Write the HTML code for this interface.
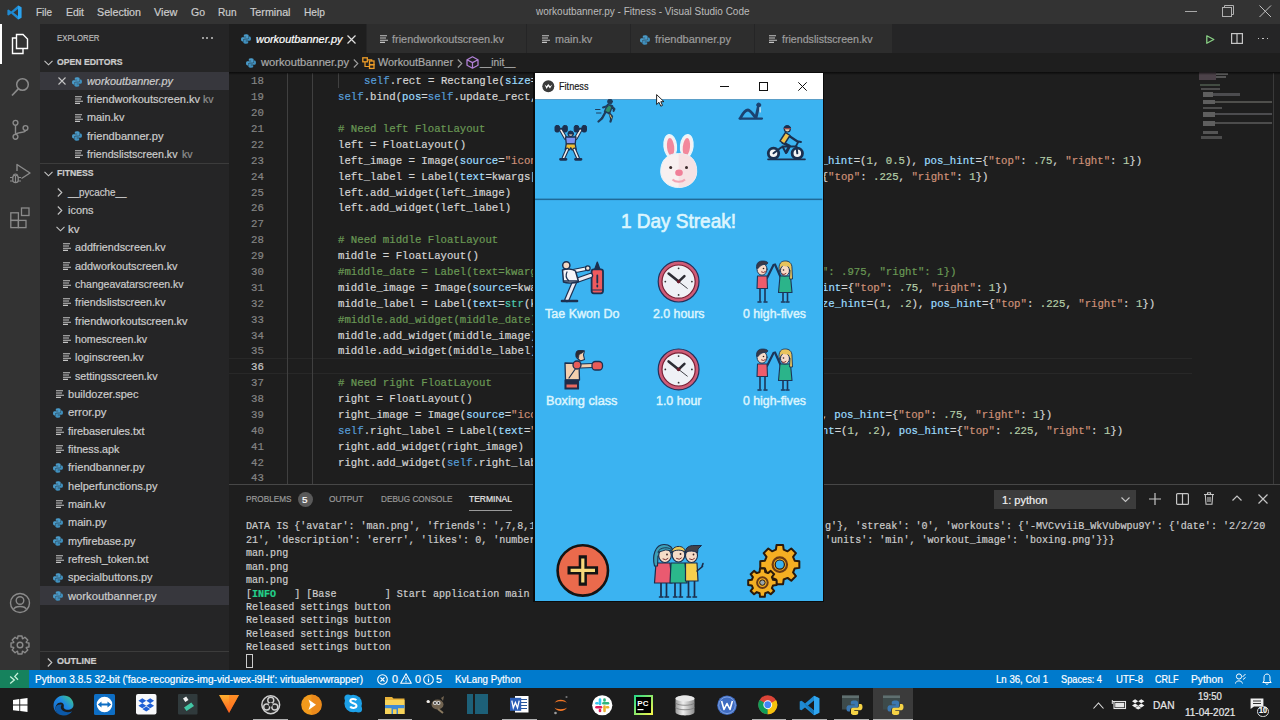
<!DOCTYPE html>
<html><head><meta charset="utf-8"><title>VS Code</title><style>*{margin:0;padding:0;box-sizing:border-box}
html,body{width:1280px;height:720px;overflow:hidden;background:#1e1e1e;font-family:"Liberation Sans",sans-serif}
.a{position:absolute}
.t{position:absolute;white-space:pre;line-height:1;-webkit-text-stroke:0.2px currentColor}
svg{overflow:visible}
</style></head><body>
<div class="a" style="left:0px;top:0px;width:1280px;height:24px;background:#333333;"></div>
<div class="a" style="left:0px;top:24px;width:40px;height:646px;background:#333333;"></div>
<div class="a" style="left:40px;top:24px;width:189px;height:646px;background:#252526;"></div>
<div class="a" style="left:229px;top:24px;width:1051px;height:29px;background:#252526;"></div>
<div class="a" style="left:229px;top:53px;width:1051px;height:19px;background:#1e1e1e;"></div>
<div class="a" style="left:0px;top:670px;width:1280px;height:18px;background:#007acc;"></div>
<div class="a" style="left:0px;top:670px;width:29px;height:18px;background:#16825d;"></div>
<div class="a" style="left:0px;top:688px;width:1280px;height:32px;background:#1c1c1c;"></div>
<svg class="a" style="left:7px;top:5px;" width="15" height="15" viewBox="0 0 15 15"><path d="M11 0.6 L14.4 2.2 V12.8 L11 14.4 L4.2 8.6 L1.6 10.6 L0.4 10 V5 L1.6 4.4 L4.2 6.4 Z" fill="#1f8ad2"/>
<path d="M11 4 L6.4 7.5 L11 11 Z" fill="#333"/><path d="M11 0.6 L14.4 2.2 V12.8 L11 14.4 Z" fill="#2ba3ee"/></svg>
<div class="a" style="left:1185px;top:11px;width:11.5px;height:1px;background:#a8a8a8;"></div>
<svg class="a" style="left:1222px;top:5px;" width="14" height="12" viewBox="0 0 14 12"><rect x="0.5" y="2.5" width="9" height="9" fill="none" stroke="#b0b0b0" stroke-width="1"/><path d="M2.5 2.5 V0.5 H11.5 V9.5 H9.5" fill="none" stroke="#b0b0b0" stroke-width="1"/></svg>
<svg class="a" style="left:1259px;top:5px;" width="13" height="13" viewBox="0 0 13 13"><path d="M0.5 0.5 L12 12 M12 0.5 L0.5 12" stroke="#c0c0c0" stroke-width="1"/></svg>
<div class="a" style="left:0px;top:24px;width:2px;height:40px;background:#ffffff;"></div>
<svg class="a" style="left:10px;top:33px;" width="22" height="22" viewBox="0 0 22 22"><path d="M6.5 1.5 H13 L17.5 6 V15.5 H6.5 Z" fill="none" stroke="#fff" stroke-width="1.4"/>
<path d="M6.5 5 H2.5 V20.5 H13 V15.5" fill="none" stroke="#fff" stroke-width="1.4"/></svg>
<svg class="a" style="left:10px;top:76px;" width="22" height="22" viewBox="0 0 22 22"><circle cx="12.5" cy="8.5" r="5.8" fill="none" stroke="#8b8b8b" stroke-width="1.5"/><path d="M8.3 12.8 L2 19.5" stroke="#8b8b8b" stroke-width="1.7"/></svg>
<svg class="a" style="left:10px;top:119px;" width="22" height="22" viewBox="0 0 22 22"><circle cx="5.5" cy="3.8" r="2.4" fill="none" stroke="#8b8b8b" stroke-width="1.4"/>
<circle cx="5.5" cy="17.8" r="2.4" fill="none" stroke="#8b8b8b" stroke-width="1.4"/>
<circle cx="15.5" cy="9" r="2.4" fill="none" stroke="#8b8b8b" stroke-width="1.4"/>
<path d="M5.5 6.2 V15.4 M15.5 11.4 C15.5 14 7 13 5.8 15.4" fill="none" stroke="#8b8b8b" stroke-width="1.4"/></svg>
<svg class="a" style="left:8px;top:162px;" width="24" height="24" viewBox="0 0 24 24"><path d="M9 9 V2.5 L22 11 L13.5 16.5" fill="none" stroke="#8b8b8b" stroke-width="1.4" stroke-linejoin="round"/>
<path d="M4.8 15.5 C4.8 12.3 10.2 12.3 10.2 15.5 V18.5 C10.2 21.2 4.8 21.2 4.8 18.5 Z" fill="none" stroke="#8b8b8b" stroke-width="1.3"/>
<path d="M5.5 13.5 C5.5 11.5 9.5 11.5 9.5 13.5" fill="none" stroke="#8b8b8b" stroke-width="1.2"/>
<path d="M2 15.5 H4.8 M10.2 15.5 H13 M2 19 H4.8 M10.2 19 H13 M7.5 14 V20.5" stroke="#8b8b8b" stroke-width="1.1"/></svg>
<svg class="a" style="left:10px;top:206px;" width="22" height="22" viewBox="0 0 22 22"><rect x="0.8" y="6.8" width="7.6" height="7.6" fill="none" stroke="#8b8b8b" stroke-width="1.3"/>
<rect x="0.8" y="14.4" width="7.6" height="7.2" fill="none" stroke="#8b8b8b" stroke-width="1.3"/>
<rect x="8.4" y="14.4" width="7.6" height="7.2" fill="none" stroke="#8b8b8b" stroke-width="1.3"/>
<rect x="11.5" y="2" width="7.5" height="7.5" fill="none" stroke="#8b8b8b" stroke-width="1.3"/></svg>
<svg class="a" style="left:9px;top:592px;" width="22" height="22" viewBox="0 0 22 22"><circle cx="11" cy="11" r="9.5" fill="none" stroke="#8b8b8b" stroke-width="1.4"/><circle cx="11" cy="8.5" r="3.8" fill="none" stroke="#8b8b8b" stroke-width="1.4"/><path d="M4.5 17.5 C6 13.5 16 13.5 17.5 17.5" fill="none" stroke="#8b8b8b" stroke-width="1.4"/></svg>
<svg class="a" style="left:9px;top:634px;" width="22" height="22" viewBox="0 0 22 22"><polygon points="19.98,8.99 19.98,13.01 17.36,13.40 17.19,13.81 18.77,15.93 15.93,18.77 13.81,17.19 13.40,17.36 13.01,19.98 8.99,19.98 8.60,17.36 8.19,17.19 6.07,18.77 3.23,15.93 4.81,13.81 4.64,13.40 2.02,13.01 2.02,8.99 4.64,8.60 4.81,8.19 3.23,6.07 6.07,3.23 8.19,4.81 8.60,4.64 8.99,2.02 13.01,2.02 13.40,4.64 13.81,4.81 15.93,3.23 18.77,6.07 17.19,8.19 17.36,8.60" fill="none" stroke="#8b8b8b" stroke-width="1.4" stroke-linejoin="round"/><circle cx="11" cy="11" r="2.8" fill="none" stroke="#8b8b8b" stroke-width="1.4"/></svg>
<div class="a" style="left:201.8px;top:37px;width:2.2px;height:2.2px;border-radius:1.1px;background:#c5c5c5"></div>
<div class="a" style="left:206.3px;top:37px;width:2.2px;height:2.2px;border-radius:1.1px;background:#c5c5c5"></div>
<div class="a" style="left:210.8px;top:37px;width:2.2px;height:2.2px;border-radius:1.1px;background:#c5c5c5"></div>
<svg class="a" style="left:44px;top:60px;" width="9" height="6" viewBox="0 0 9 6"><path d="M0.5 0.8 L4.5 4.8 L8.5 0.8" fill="none" stroke="#c5c5c5" stroke-width="1.1"/></svg>
<div class="a" style="left:40px;top:71.5px;width:189px;height:18px;background:#37373d;"></div>
<svg class="a" style="left:58px;top:77px;" width="8" height="8" viewBox="0 0 8 8"><path d="M0.5 0.5 L7.5 7.5 M7.5 0.5 L0.5 7.5" stroke="#c5c5c5" stroke-width="1.1"/></svg>
<div class="a" style="left:40px;top:163px;width:189px;height:1px;background:#3c3c3c;"></div>
<svg class="a" style="left:44px;top:171px;" width="9" height="6" viewBox="0 0 9 6"><path d="M0.5 0.8 L4.5 4.8 L8.5 0.8" fill="none" stroke="#c5c5c5" stroke-width="1.1"/></svg>
<svg class="a" style="left:57px;top:188.0px;" width="6" height="9" viewBox="0 0 6 9"><path d="M0.8 0.5 L4.8 4.5 L0.8 8.5" fill="none" stroke="#c5c5c5" stroke-width="1.1"/></svg>
<svg class="a" style="left:57px;top:206.35px;" width="6" height="9" viewBox="0 0 6 9"><path d="M0.8 0.5 L4.8 4.5 L0.8 8.5" fill="none" stroke="#c5c5c5" stroke-width="1.1"/></svg>
<svg class="a" style="left:56px;top:226.2px;" width="9" height="6" viewBox="0 0 9 6"><path d="M0.5 0.8 L4.5 4.8 L8.5 0.8" fill="none" stroke="#c5c5c5" stroke-width="1.1"/></svg>
<div class="a" style="left:40px;top:586.4000000000001px;width:189px;height:18.3px;background:#37373d;"></div>
<div class="a" style="left:40px;top:651px;width:189px;height:1px;background:#3c3c3c;"></div>
<svg class="a" style="left:47px;top:657.5px;" width="6" height="9" viewBox="0 0 6 9"><path d="M0.8 0.5 L4.8 4.5 L0.8 8.5" fill="none" stroke="#c5c5c5" stroke-width="1.1"/></svg>
<div class="a" style="left:229px;top:24px;width:137.5px;height:29px;background:#1e1e1e;"></div>
<div class="a" style="left:366.5px;top:24px;width:160.5px;height:29px;background:#2d2d2d;"></div>
<div class="a" style="left:526px;top:24px;width:1px;height:29px;background:#252526;"></div>
<div class="a" style="left:527px;top:24px;width:103.5px;height:29px;background:#2d2d2d;"></div>
<div class="a" style="left:629.5px;top:24px;width:1px;height:29px;background:#252526;"></div>
<div class="a" style="left:630.5px;top:24px;width:124.0px;height:29px;background:#2d2d2d;"></div>
<div class="a" style="left:753.5px;top:24px;width:1px;height:29px;background:#252526;"></div>
<div class="a" style="left:754.5px;top:24px;width:138.5px;height:29px;background:#2d2d2d;"></div>
<div class="a" style="left:892px;top:24px;width:1px;height:29px;background:#252526;"></div>
<div class="a" style="left:365.5px;top:24px;width:1px;height:29px;background:#252526;"></div>
<svg class="a" style="left:347px;top:35px;" width="9" height="9" viewBox="0 0 9 9"><path d="M0.5 0.5 L8.5 8.5 M8.5 0.5 L0.5 8.5" stroke="#e0e0e0" stroke-width="1.2"/></svg>
<svg class="a" style="left:1206px;top:34.5px;" width="9" height="9" viewBox="0 0 9 9"><path d="M0.8 0.8 L7.8 4.5 L0.8 8.2 Z" fill="none" stroke="#89d185" stroke-width="1.3" stroke-linejoin="round"/></svg>
<svg class="a" style="left:1231px;top:33px;" width="12" height="11" viewBox="0 0 12 11"><rect x="0.6" y="0.6" width="10.8" height="9.8" fill="none" stroke="#c5c5c5" stroke-width="1.2"/><path d="M6 0.6 V10.4" stroke="#c5c5c5" stroke-width="1.2"/></svg>
<div class="a" style="left:1257.5px;top:37.5px;width:1.8px;height:1.8px;background:#c5c5c5;"></div>
<div class="a" style="left:1262px;top:37.5px;width:1.8px;height:1.8px;background:#c5c5c5;"></div>
<div class="a" style="left:1266.5px;top:37.5px;width:1.8px;height:1.8px;background:#c5c5c5;"></div>
<svg class="a" style="left:353px;top:58.5px;" width="6" height="9" viewBox="0 0 6 9"><path d="M0.8 0.5 L4.8 4.5 L0.8 8.5" fill="none" stroke="#a0a0a0" stroke-width="1.1"/></svg>
<svg class="a" style="left:361.8px;top:56.5px;" width="13" height="12" viewBox="0 0 13 12"><rect x="0.8" y="0.8" width="4.5" height="4" fill="none" stroke="#ee9d28" stroke-width="1.3"/>
<rect x="7.5" y="4" width="4.5" height="3.6" fill="none" stroke="#ee9d28" stroke-width="1.3"/>
<rect x="7.5" y="7.8" width="4.5" height="3.6" fill="none" stroke="#ee9d28" stroke-width="1.3"/>
<path d="M3 5 V9.5 H7.5 M5.3 2.8 H9.7 V4" fill="none" stroke="#ee9d28" stroke-width="1.2"/></svg>
<svg class="a" style="left:457px;top:58.5px;" width="6" height="9" viewBox="0 0 6 9"><path d="M0.8 0.5 L4.8 4.5 L0.8 8.5" fill="none" stroke="#a0a0a0" stroke-width="1.1"/></svg>
<svg class="a" style="left:466px;top:56px;" width="13" height="13" viewBox="0 0 13 13"><path d="M6.5 0.8 L12 3.7 V9.3 L6.5 12.2 L1 9.3 V3.7 Z M1 3.7 L6.5 6.6 L12 3.7 M6.5 6.6 V12.2" fill="none" stroke="#b180d7" stroke-width="1.3" stroke-linejoin="round"/></svg>
<div class="a" style="left:229px;top:358.44000000000005px;width:963px;height:15.88px;background:transparent;border-top:1px solid #282828;border-bottom:1px solid #282828"></div>
<div class="a" style="left:286.8px;top:72.6px;width:1px;height:412.88px;background:#404040;"></div>
<div class="a" style="left:312.44px;top:72.6px;width:1px;height:412.88px;background:#404040;"></div>
<div class="a" style="left:338.08000000000004px;top:72.6px;width:1px;height:15.88px;background:#404040;"></div>
<div class="a" style="left:1273px;top:73px;width:1px;height:411px;background:#3a3a3a;"></div>
<div class="a" style="left:1199px;top:72px;width:17px;height:8px;background:#6a5a66;opacity:0.6"></div>
<div class="a" style="left:1216px;top:73px;width:12px;height:1.5px;background:#8a8a8a;opacity:0.6"></div>
<div class="a" style="left:1216px;top:76px;width:10px;height:1.5px;background:#7a7a7a;opacity:0.6"></div>
<div class="a" style="left:1200px;top:84px;width:20px;height:2px;background:#5a6a5a;opacity:0.6"></div>
<div class="a" style="left:1201px;top:88px;width:19px;height:2px;background:#6a6a6a;opacity:0.6"></div>
<div class="a" style="left:1203px;top:92px;width:10px;height:5px;background:#8a8a8a;opacity:0.6"></div>
<div class="a" style="left:1213px;top:93px;width:27px;height:2.5px;background:#6a6a70;opacity:0.6"></div>
<div class="a" style="left:1203px;top:100px;width:12px;height:4px;background:#8a8a8a;opacity:0.6"></div>
<div class="a" style="left:1215px;top:101px;width:57px;height:2px;background:#70706a;opacity:0.6"></div>
<div class="a" style="left:1203px;top:107px;width:19px;height:2px;background:#6a6a6a;opacity:0.6"></div>
<div class="a" style="left:1203px;top:112px;width:12px;height:5px;background:#8a8a8a;opacity:0.6"></div>
<div class="a" style="left:1215px;top:113px;width:57px;height:2px;background:#6a6a70;opacity:0.6"></div>
<div class="a" style="left:1203px;top:121px;width:12px;height:5px;background:#8a8a8a;opacity:0.6"></div>
<div class="a" style="left:1215px;top:122px;width:57px;height:2px;background:#6a6a6a;opacity:0.6"></div>
<div class="a" style="left:1203px;top:131px;width:15px;height:2.5px;background:#7a7a7a;opacity:0.6"></div>
<div class="a" style="left:1201px;top:136px;width:21px;height:3px;background:#6a6a6a;opacity:0.6"></div>
<div class="a" style="left:1192px;top:73px;width:81px;height:411px;background:transparent;"></div>
<div class="a" style="left:229px;top:484px;width:1051px;height:1px;background:#474747;"></div>
<div class="a" style="left:297.5px;top:492px;width:15px;height:15px;border-radius:8px;background:#5a5a5a"></div>
<div class="a" style="left:468.5px;top:510px;width:43px;height:1.3px;background:#9a9a9a;"></div>
<div class="a" style="left:994px;top:489.5px;width:141.5px;height:19.5px;background:#3c3c3c;"></div>
<svg class="a" style="left:1120.5px;top:497px;" width="9" height="6" viewBox="0 0 9 6"><path d="M0.5 0.5 L4.5 4.5 L8.5 0.5" fill="none" stroke="#c5c5c5" stroke-width="1.1"/></svg>
<svg class="a" style="left:1149px;top:493px;" width="12" height="12" viewBox="0 0 12 12"><path d="M6 0 V12 M0 6 H12" stroke="#c5c5c5" stroke-width="1.2"/></svg>
<svg class="a" style="left:1176px;top:493px;" width="13" height="12" viewBox="0 0 13 12"><rect x="0.6" y="0.6" width="11.8" height="10.8" rx="1" fill="none" stroke="#c5c5c5" stroke-width="1.2"/><path d="M6.5 0.6 V11.4" stroke="#c5c5c5" stroke-width="1.2"/></svg>
<svg class="a" style="left:1204px;top:492px;" width="10" height="13" viewBox="0 0 10 13"><path d="M0 2.5 H10 M3.5 2.5 V0.8 H6.5 V2.5 M1.3 2.5 L2 12.2 H8 L8.7 2.5 M4 5 V10 M6 5 V10" fill="none" stroke="#c5c5c5" stroke-width="1.1"/></svg>
<svg class="a" style="left:1231.5px;top:495px;" width="10" height="6" viewBox="0 0 10 6"><path d="M0.5 5.5 L5 1 L9.5 5.5" fill="none" stroke="#c5c5c5" stroke-width="1.2"/></svg>
<svg class="a" style="left:1258px;top:494px;" width="10" height="10" viewBox="0 0 10 10"><path d="M0.5 0.5 L9.5 9.5 M9.5 0.5 L0.5 9.5" stroke="#c5c5c5" stroke-width="1.2"/></svg>
<div class="a" style="left:246.3px;top:654px;width:6.4px;height:13.5px;background:transparent;border:1px solid #cccccc"></div>
<svg class="a" style="left:8px;top:672px;" width="12" height="13" viewBox="0 0 12 13"><path d="M2.2 4.6 L6.3 8 L2.2 11.4 M10 1 L6.8 4.4 L10 7.8" fill="none" stroke="#c8f2da" stroke-width="1.3"/></svg>
<svg class="a" style="left:377px;top:673.5px;" width="11" height="11" viewBox="0 0 11 11"><circle cx="5.5" cy="5.5" r="4.8" fill="none" stroke="#fff" stroke-width="1.1"/><path d="M3.5 3.5 L7.5 7.5 M7.5 3.5 L3.5 7.5" stroke="#fff" stroke-width="1.1"/></svg>
<svg class="a" style="left:400px;top:673px;" width="12" height="11" viewBox="0 0 12 11"><path d="M6 0.8 L11.3 10.3 H0.7 Z" fill="none" stroke="#fff" stroke-width="1.1" stroke-linejoin="round"/><path d="M6 4 V7.3 M6 8.3 V9.3" stroke="#fff" stroke-width="1.1"/></svg>
<svg class="a" style="left:422.5px;top:673.5px;" width="11" height="11" viewBox="0 0 11 11"><circle cx="5.5" cy="5.5" r="4.8" fill="none" stroke="#fff" stroke-width="1.1"/><path d="M5.5 4.5 V8.3 M5.5 2.6 V3.6" stroke="#fff" stroke-width="1.2"/></svg>
<svg class="a" style="left:1235px;top:673px;" width="11" height="11" viewBox="0 0 11 11"><circle cx="4" cy="3.5" r="2.6" fill="none" stroke="#fff" stroke-width="1"/><path d="M0.5 10.5 C0.8 7 7 7 7.5 10.5 M7.5 4 L10.5 1 M8 6.5 L10.5 4.5" fill="none" stroke="#fff" stroke-width="1"/></svg>
<svg class="a" style="left:1261.5px;top:672.5px;" width="10" height="12" viewBox="0 0 10 12"><path d="M5 1 C2.3 1 2 3.5 2 5 V8 L0.8 9.5 H9.2 L8 8 V5 C8 3.5 7.7 1 5 1 Z M3.8 10.5 C4 11.6 6 11.6 6.2 10.5" fill="none" stroke="#fff" stroke-width="1"/></svg>
<svg class="a" style="left:12.8px;top:697.6px;" width="15" height="14" viewBox="0 0 15 14"><path d="M0 1.9 L6.3 1 V6.6 H0 Z M7.2 0.9 L14.5 0 V6.6 H7.2 Z M0 7.5 H6.3 V13 L0 12.2 Z M7.2 7.5 H14.5 V14 L7.2 13.1 Z" fill="#ffffff"/></svg>
<svg class="a" style="left:52.5px;top:694.5px;" width="21" height="21" viewBox="0 0 21 21"><defs><linearGradient id="eg" x1="0" y1="1" x2="1" y2="0"><stop offset="0" stop-color="#1565c0"/><stop offset="0.55" stop-color="#1e88e5"/><stop offset="1" stop-color="#43d17a"/></linearGradient></defs>
<path d="M10.5 0.5 C16.5 0.5 20.5 4.8 20.5 9.8 C20.5 13 18 14.8 14.8 14.8 C12 14.8 10.2 13.5 10.8 11.3 C11.3 9.6 10 7.5 7.5 7.5 C4.4 7.5 2.5 10.5 2.5 13.5 C2.5 17.5 6.3 20.5 10.8 20.5 C4.8 20.5 0.5 16 0.5 10.5 C0.5 5 5 0.5 10.5 0.5 Z" fill="url(#eg)"/>
<path d="M2.5 13.5 C2.5 17.5 6.3 20.5 10.8 20.5 C14.5 20.5 17.5 18.8 19.2 16.2 C16 18 11 17.5 8.6 14.5 C7.5 13 7.6 11 8.8 9.8 C6 9 2.5 10.5 2.5 13.5 Z" fill="#0c59a8"/></svg>
<svg class="a" style="left:93.8px;top:694.4px;" width="21" height="21" viewBox="0 0 21 21"><rect x="0" y="0" width="21" height="21" rx="1.5" fill="#0e6ec4"/><circle cx="10.5" cy="10.5" r="7.8" fill="#ffffff"/><path d="M3.8 10.5 L7.5 7.6 V9.4 H13.5 V7.6 L17.2 10.5 L13.5 13.4 V11.6 H7.5 V13.4 Z" fill="#0e6ec4"/></svg>
<svg class="a" style="left:136px;top:694.4px;" width="20.5" height="20.5" viewBox="0 0 20.5 20.5"><rect x="0" y="0" width="20.5" height="20.5" rx="2" fill="#f7f8fa"/><path d="M6.3 4.2 L10.2 6.7 L6.3 9.2 L2.4 6.7 Z M14.2 4.2 L18.1 6.7 L14.2 9.2 L10.3 6.7 Z M6.3 9.3 L10.2 11.8 L6.3 14.3 L2.4 11.8 Z M14.2 9.3 L18.1 11.8 L14.2 14.3 L10.3 11.8 Z M6.4 14.9 L10.25 12.5 L14.1 14.9 L10.25 17.4 Z" fill="#1f5fd6"/></svg>
<svg class="a" style="left:177.8px;top:694.4px;" width="19.5" height="20.5" viewBox="0 0 19.5 20.5"><rect x="0" y="0" width="19.5" height="20.5" rx="1" fill="#303a3c"/><path d="M5 4.5 L8.2 2.5 L10.5 6 L7.3 8 Z" fill="#f2f2f2"/><path d="M6 13.5 L13.3 8.5 L16 12 L8.5 17 Z" fill="#43c7a6"/></svg>
<svg class="a" style="left:218.5px;top:694.5px;" width="20" height="18" viewBox="0 0 20 18"><defs><linearGradient id="og" x1="0" y1="0" x2="0" y2="1"><stop offset="0" stop-color="#ffb02e"/><stop offset="1" stop-color="#ff5a1f"/></linearGradient></defs><path d="M0 0 H20 L10 18 Z" fill="url(#og)"/><path d="M10 0 H20 L10 18 Z" fill="#ff7a20" opacity="0.6"/></svg>
<svg class="a" style="left:260.6px;top:694.5px;" width="19.5" height="19.5" viewBox="0 0 19.5 19.5"><circle cx="9.75" cy="9.75" r="8.9" fill="#2a2a2a" stroke="#d0d0d0" stroke-width="1.5"/><g fill="none" stroke="#d0d0d0" stroke-width="1.4"><circle cx="9.75" cy="5.2" r="3"/><circle cx="5.7" cy="12" r="3"/><circle cx="13.8" cy="12" r="3"/></g><circle cx="9.75" cy="9.75" r="2" fill="#2a2a2a"/></svg>
<div class="a" style="left:253px;top:718.5px;width:35px;height:1.5px;background:#b0b0b0;"></div>
<svg class="a" style="left:301px;top:693.5px;" width="21" height="21.5" viewBox="0 0 21 21.5"><circle cx="10.5" cy="10.75" r="10.3" fill="#f29a1c"/><path d="M10.5 0.45 A10.3 10.3 0 0 1 10.5 21.05 Z" fill="#e8801a" opacity="0.6"/><path d="M7.5 5.5 L15 10.7 L7.5 16 L9.3 10.7 Z" fill="#ffffff"/></svg>
<svg class="a" style="left:344px;top:694.4px;" width="18.5" height="19" viewBox="0 0 18.5 19"><circle cx="9.2" cy="9.5" r="8.8" fill="#1da1e8"/><circle cx="4" cy="4" r="3.6" fill="#1da1e8"/><circle cx="14.5" cy="15" r="3.6" fill="#1da1e8"/><path d="M12.3 6.3 C11.5 4.8 6.3 4.4 6.3 7 C6.3 9.6 12.5 8.8 12.5 11.8 C12.5 14.6 7.2 14.4 6.2 12.6" fill="none" stroke="#fff" stroke-width="2"/></svg>
<svg class="a" style="left:384.8px;top:694.5px;" width="19.5" height="19" viewBox="0 0 19.5 19"><path d="M0 2 H7 L8.5 3.5 H19.5 V19 H0 Z" fill="#e9b33a"/><rect x="0" y="5" width="19.5" height="14" fill="#f7d45a"/><rect x="0" y="10" width="19.5" height="3.2" fill="#3e8ad6"/><rect x="6.5" y="13" width="6.5" height="6" fill="#3e8ad6"/><rect x="8" y="14.3" width="3.5" height="4.7" fill="#f7d45a"/></svg>
<div class="a" style="left:378px;top:718.5px;width:34px;height:1.5px;background:#b0b0b0;"></div>
<svg class="a" style="left:425.8px;top:695px;" width="20.5" height="19" viewBox="0 0 20.5 19"><ellipse cx="11.5" cy="9.5" rx="6" ry="5" fill="#716350"/><circle cx="9" cy="8" r="2" fill="#ddd"/><circle cx="12.5" cy="8" r="2" fill="#ddd"/><circle cx="9" cy="8" r="0.9" fill="#222"/><circle cx="12.5" cy="8" r="0.9" fill="#222"/><path d="M4 7 L0.5 6.5 M12 14 L17 18" stroke="#8a7a60" stroke-width="2"/><path d="M15 3 L18 1 L17 6 Z" fill="#716350"/><circle cx="2.2" cy="6.5" r="1.5" fill="#eee"/></svg>
<div class="a" style="left:467px;top:694.2px;width:6.2px;height:20px;background:#1d6078;"></div>
<div class="a" style="left:474.7px;top:694.2px;width:13.5px;height:20px;background:#1d6078;"></div>
<svg class="a" style="left:509.7px;top:695px;" width="18.5" height="18.5" viewBox="0 0 18.5 18.5"><rect x="5" y="1" width="13.5" height="16.5" fill="#ffffff"/><g stroke="#2b579a" stroke-width="1.2"><path d="M10 4.5 H17 M10 7.5 H17 M10 10.5 H17 M10 13.5 H17"/></g><rect x="0" y="2.8" width="11.2" height="13" fill="#2b5eb8"/><path d="M1.8 5.6 L3.3 12.8 L5.4 7.5 L7.5 12.8 L9.2 5.6" fill="none" stroke="#fff" stroke-width="1.3"/></svg>
<div class="a" style="left:502px;top:718.5px;width:34.5px;height:1.5px;background:#b0b0b0;"></div>
<svg class="a" style="left:553px;top:694.5px;" width="15.5" height="20" viewBox="0 0 15.5 20"><path d="M1.5 8 C3.5 3.5 12 3.5 14 8 C12 5.8 3.5 5.8 1.5 8 Z" fill="#f37726"/><path d="M1.5 12.5 C3.5 17 12 17 14 12.5 C12 14.7 3.5 14.7 1.5 12.5 Z" fill="#f37726"/><circle cx="13.5" cy="2" r="1.1" fill="#767677"/><circle cx="2.5" cy="18" r="1.3" fill="#9e9e9e"/></svg>
<svg class="a" style="left:592px;top:694.5px;" width="20.5" height="20.5" viewBox="0 0 20.5 20.5"><circle cx="10.25" cy="10.25" r="10.1" fill="#ffffff"/><g stroke-linecap="round" stroke-width="2.6"><path d="M8 4.5 V9" stroke="#36c5f0"/><path d="M4.5 12.3 H9" stroke="#e01e5a"/><path d="M12.5 16 V11.5" stroke="#ecb22e"/><path d="M16 8.2 H11.5" stroke="#2eb67d"/><path d="M4.5 8.2 H5.5" stroke="#36c5f0"/><path d="M8 16 V15" stroke="#e01e5a"/><path d="M16 12.3 H15" stroke="#ecb22e"/><path d="M12.5 4.5 V5.5" stroke="#2eb67d"/></g></svg>
<svg class="a" style="left:634px;top:694.5px;" width="19" height="20" viewBox="0 0 19 20"><defs><linearGradient id="pcg" x1="0" y1="0" x2="1" y2="1"><stop offset="0" stop-color="#21d789"/><stop offset="1" stop-color="#fcf84a"/></linearGradient></defs><rect x="0" y="0" width="19" height="20" fill="url(#pcg)"/><rect x="2" y="2" width="15" height="16" fill="#000"/><text x="3.3" y="10.5" font-family="Liberation Sans" font-weight="700" font-size="8" fill="#fff">PC</text><rect x="3.5" y="14" width="6" height="1.2" fill="#fff"/></svg>
<svg class="a" style="left:674.8px;top:694.5px;" width="20" height="20.5" viewBox="0 0 20 20.5"><defs><linearGradient id="dbg" x1="0" y1="0" x2="1" y2="0"><stop offset="0" stop-color="#9a9a9a"/><stop offset="0.4" stop-color="#eeeeee"/><stop offset="1" stop-color="#8a8a8a"/></linearGradient></defs><path d="M0.5 3.5 C0.5 -0.5 19.5 -0.5 19.5 3.5 V17 C19.5 21.5 0.5 21.5 0.5 17 Z" fill="url(#dbg)"/><ellipse cx="10" cy="3.5" rx="9.5" ry="3" fill="#e8e8e8"/><path d="M0.5 8 C3 11 17 11 19.5 8 M0.5 12.5 C3 15.5 17 15.5 19.5 12.5" fill="none" stroke="#777" stroke-width="0.8"/></svg>
<svg class="a" style="left:716.5px;top:694.5px;" width="20" height="20.5" viewBox="0 0 20 20.5"><circle cx="10" cy="10.25" r="9.8" fill="#3f6cc2"/><circle cx="10" cy="10.25" r="8.3" fill="none" stroke="#8fb0ea" stroke-width="0.8"/><path d="M4.6 6 L7 14.5 L10 8.5 L13 14.5 L15.4 6" fill="none" stroke="#fff" stroke-width="1.6" stroke-linejoin="round"/></svg>
<svg class="a" style="left:758px;top:695px;" width="19.5" height="19.5" viewBox="0 0 19.5 19.5"><circle cx="9.75" cy="9.75" r="9.5" fill="#db4437"/><path d="M9.75 9.75 L1.5 5 A9.5 9.5 0 0 0 9.75 19.25 Z" fill="#0f9d58"/><path d="M9.75 9.75 L9.75 19.25 A9.5 9.5 0 0 0 18 5 Z" fill="#f4c20d"/><path d="M9.75 9.75 L18 5 L9.75 5 Z" fill="#db4437"/><circle cx="9.75" cy="9.75" r="4.4" fill="#fff"/><circle cx="9.75" cy="9.75" r="3.4" fill="#4285f4"/></svg>
<div class="a" style="left:751.6px;top:718.5px;width:34px;height:1.5px;background:#b0b0b0;"></div>
<svg class="a" style="left:799.4px;top:694.5px;" width="21" height="21" viewBox="0 0 21 21"><path d="M15 0.8 L20.3 3.3 V17.7 L15 20.2 L6 12.5 L2.5 15.3 L0.7 14.5 V6.5 L2.5 5.7 L6 8.5 Z" fill="#1f8ad2"/><path d="M15 5.6 L9 10.5 L15 15.4 Z" fill="#1c1c1c"/><path d="M2.5 5.7 L15 15.4 V20.2 Z" fill="#1679bd"/><path d="M15 0.8 L20.3 3.3 V17.7 L15 20.2 Z" fill="#30a6f0"/></svg>
<div class="a" style="left:792.3px;top:718.5px;width:35px;height:1.5px;background:#b0b0b0;"></div>
<div class="a" style="left:833.6px;top:718.5px;width:35px;height:1.5px;background:#b0b0b0;"></div>
<svg class="a" style="left:841.6px;top:695px;" width="21" height="20" viewBox="0 0 21 20"><rect x="0" y="0.5" width="17" height="14" fill="#3d4a4a"/><rect x="0" y="0.5" width="17" height="2.5" fill="#607070"/>
<path d="M12.5 5.5 C8.5 5.5 8.8 7.3 8.8 7.3 V9.5 H12.7 V10.3 H6.8 C6.8 10.3 4.5 10.2 4.5 13.5 C4.5 16.8 6.5 16.5 6.5 16.5 H8 V14.8 C8 14.8 8 12.8 10 12.8 H14 C14 12.8 16 12.8 16 10.8 V7.5 C16 7.5 16.3 5.5 12.5 5.5 Z" fill="#3b77b0"/>
<path d="M12.5 20 C16.5 20 16.2 18.2 16.2 18.2 V16 H12.3 V15.2 H18.2 C18.2 15.2 20.5 15.3 20.5 12 C20.5 8.7 18.5 9 18.5 9 H17 V10.7 C17 10.7 17 12.7 15 12.7 H11 C11 12.7 9 12.7 9 14.7 V18 C9 18 8.7 20 12.5 20 Z" fill="#f6d345"/></svg>
<div class="a" style="left:872.5px;top:688px;width:40.5px;height:32px;background:#3b3b3b;"></div>
<div class="a" style="left:872.5px;top:718.5px;width:40.5px;height:1.5px;background:#b8b8b8;"></div>
<svg class="a" style="left:883px;top:695px;" width="21" height="20" viewBox="0 0 21 20"><rect x="0" y="0.5" width="17" height="14" fill="#3d4a4a"/><rect x="0" y="0.5" width="17" height="2.5" fill="#607070"/>
<path d="M12.5 5.5 C8.5 5.5 8.8 7.3 8.8 7.3 V9.5 H12.7 V10.3 H6.8 C6.8 10.3 4.5 10.2 4.5 13.5 C4.5 16.8 6.5 16.5 6.5 16.5 H8 V14.8 C8 14.8 8 12.8 10 12.8 H14 C14 12.8 16 12.8 16 10.8 V7.5 C16 7.5 16.3 5.5 12.5 5.5 Z" fill="#3b77b0"/>
<path d="M12.5 20 C16.5 20 16.2 18.2 16.2 18.2 V16 H12.3 V15.2 H18.2 C18.2 15.2 20.5 15.3 20.5 12 C20.5 8.7 18.5 9 18.5 9 H17 V10.7 C17 10.7 17 12.7 15 12.7 H11 C11 12.7 9 12.7 9 14.7 V18 C9 18 8.7 20 12.5 20 Z" fill="#f6d345"/></svg>
<svg class="a" style="left:1093.3px;top:701.5px;" width="11" height="7" viewBox="0 0 11 7"><path d="M0.5 6.5 L5.5 1 L10.5 6.5" fill="none" stroke="#e0e0e0" stroke-width="1.1"/></svg>
<svg class="a" style="left:1112px;top:700.2px;" width="14" height="9" viewBox="0 0 14 9"><rect x="2" y="1.5" width="11.5" height="7" fill="none" stroke="#e6e6e6" stroke-width="1.1"/><rect x="3.2" y="2.8" width="9" height="4.5" fill="#e6e6e6"/><path d="M0.3 0 V4 M0.3 1.5 H2" stroke="#e6e6e6" stroke-width="1"/></svg>
<svg class="a" style="left:1132.3px;top:699.3px;" width="12.5" height="10.5" viewBox="0 0 12.5 10.5"><path d="M3.1 0.3 L6.2 2.3 L3.1 4.3 L0 2.3 Z M9.3 0.3 L12.4 2.3 L9.3 4.3 L6.2 2.3 Z M3.1 4.4 L6.2 6.4 L3.1 8.4 L0 6.4 Z M9.3 4.4 L12.4 6.4 L9.3 8.4 L6.2 6.4 Z M3.2 8.9 L6.2 7 L9.2 8.9 L6.2 10.5 Z" fill="#f0f0f0"/></svg>
<svg class="a" style="left:1250px;top:698.3px;" width="14" height="11.5" viewBox="0 0 14 11.5"><path d="M0.6 0.6 H13.4 V8.6 H4 L0.6 11 Z" fill="#f0f0f0"/><path d="M3 3 H11 M3 5.5 H11" stroke="#1c1c1c" stroke-width="0.9"/></svg>
<div class="a" style="left:1257.2px;top:705.5px;width:11.5px;height:11.5px;border-radius:6px;background:#1c1c1c;border:1px solid #dcdcdc"></div>
<svg class="a" style="left:72px;top:76.5px;" width="10" height="10" viewBox="0 0 10 10"><path d="M5 0.3 C2.6 0.3 2.8 1.3 2.8 1.3 V2.8 H5.2 V3.3 H1.6 C1.6 3.3 0 3.1 0 5.3 C0 7.5 1.4 7.4 1.4 7.4 H2.3 V6.2 C2.3 6.2 2.2 4.8 3.7 4.8 H6.2 C6.2 4.8 7.6 4.8 7.6 3.5 V1.5 C7.6 1.5 7.8 0.3 5 0.3 Z" fill="#4a9bc9"/>
<path d="M5 9.7 C7.4 9.7 7.2 8.7 7.2 8.7 V7.2 H4.8 V6.7 H8.4 C8.4 6.7 10 6.9 10 4.7 C10 2.5 8.6 2.6 8.6 2.6 H7.7 V3.8 C7.7 3.8 7.8 5.2 6.3 5.2 H3.8 C3.8 5.2 2.4 5.2 2.4 6.5 V8.5 C2.4 8.5 2.2 9.7 5 9.7 Z" fill="#3f8fbd"/></svg>
<svg class="a" style="left:75px;top:95.5px;" width="9" height="9" viewBox="0 0 9 9"><path d="M0 0.8 H7 M0 3 H6 M0 5.2 H8 M0 7.4 H5" stroke="#c5c5c5" stroke-width="1.1"/></svg>
<svg class="a" style="left:75px;top:113.5px;" width="9" height="9" viewBox="0 0 9 9"><path d="M0 0.8 H7 M0 3 H6 M0 5.2 H8 M0 7.4 H5" stroke="#c5c5c5" stroke-width="1.1"/></svg>
<svg class="a" style="left:72px;top:131px;" width="10" height="10" viewBox="0 0 10 10"><path d="M5 0.3 C2.6 0.3 2.8 1.3 2.8 1.3 V2.8 H5.2 V3.3 H1.6 C1.6 3.3 0 3.1 0 5.3 C0 7.5 1.4 7.4 1.4 7.4 H2.3 V6.2 C2.3 6.2 2.2 4.8 3.7 4.8 H6.2 C6.2 4.8 7.6 4.8 7.6 3.5 V1.5 C7.6 1.5 7.8 0.3 5 0.3 Z" fill="#4a9bc9"/>
<path d="M5 9.7 C7.4 9.7 7.2 8.7 7.2 8.7 V7.2 H4.8 V6.7 H8.4 C8.4 6.7 10 6.9 10 4.7 C10 2.5 8.6 2.6 8.6 2.6 H7.7 V3.8 C7.7 3.8 7.8 5.2 6.3 5.2 H3.8 C3.8 5.2 2.4 5.2 2.4 6.5 V8.5 C2.4 8.5 2.2 9.7 5 9.7 Z" fill="#3f8fbd"/></svg>
<svg class="a" style="left:75px;top:150px;" width="9" height="9" viewBox="0 0 9 9"><path d="M0 0.8 H7 M0 3 H6 M0 5.2 H8 M0 7.4 H5" stroke="#c5c5c5" stroke-width="1.1"/></svg>
<svg class="a" style="left:62.5px;top:243.25px;" width="9" height="9" viewBox="0 0 9 9"><path d="M0 0.8 H7 M0 3 H6 M0 5.2 H8 M0 7.4 H5" stroke="#c5c5c5" stroke-width="1.1"/></svg>
<svg class="a" style="left:62.5px;top:261.59999999999997px;" width="9" height="9" viewBox="0 0 9 9"><path d="M0 0.8 H7 M0 3 H6 M0 5.2 H8 M0 7.4 H5" stroke="#c5c5c5" stroke-width="1.1"/></svg>
<svg class="a" style="left:62.5px;top:279.95px;" width="9" height="9" viewBox="0 0 9 9"><path d="M0 0.8 H7 M0 3 H6 M0 5.2 H8 M0 7.4 H5" stroke="#c5c5c5" stroke-width="1.1"/></svg>
<svg class="a" style="left:62.5px;top:298.3px;" width="9" height="9" viewBox="0 0 9 9"><path d="M0 0.8 H7 M0 3 H6 M0 5.2 H8 M0 7.4 H5" stroke="#c5c5c5" stroke-width="1.1"/></svg>
<svg class="a" style="left:62.5px;top:316.65000000000003px;" width="9" height="9" viewBox="0 0 9 9"><path d="M0 0.8 H7 M0 3 H6 M0 5.2 H8 M0 7.4 H5" stroke="#c5c5c5" stroke-width="1.1"/></svg>
<svg class="a" style="left:62.5px;top:335.0px;" width="9" height="9" viewBox="0 0 9 9"><path d="M0 0.8 H7 M0 3 H6 M0 5.2 H8 M0 7.4 H5" stroke="#c5c5c5" stroke-width="1.1"/></svg>
<svg class="a" style="left:62.5px;top:353.34999999999997px;" width="9" height="9" viewBox="0 0 9 9"><path d="M0 0.8 H7 M0 3 H6 M0 5.2 H8 M0 7.4 H5" stroke="#c5c5c5" stroke-width="1.1"/></svg>
<svg class="a" style="left:62.5px;top:371.7px;" width="9" height="9" viewBox="0 0 9 9"><path d="M0 0.8 H7 M0 3 H6 M0 5.2 H8 M0 7.4 H5" stroke="#c5c5c5" stroke-width="1.1"/></svg>
<svg class="a" style="left:56px;top:390.05px;" width="9" height="9" viewBox="0 0 9 9"><path d="M0 0.8 H7 M0 3 H6 M0 5.2 H8 M0 7.4 H5" stroke="#c5c5c5" stroke-width="1.1"/></svg>
<svg class="a" style="left:53px;top:407.70000000000005px;" width="10" height="10" viewBox="0 0 10 10"><path d="M5 0.3 C2.6 0.3 2.8 1.3 2.8 1.3 V2.8 H5.2 V3.3 H1.6 C1.6 3.3 0 3.1 0 5.3 C0 7.5 1.4 7.4 1.4 7.4 H2.3 V6.2 C2.3 6.2 2.2 4.8 3.7 4.8 H6.2 C6.2 4.8 7.6 4.8 7.6 3.5 V1.5 C7.6 1.5 7.8 0.3 5 0.3 Z" fill="#4a9bc9"/>
<path d="M5 9.7 C7.4 9.7 7.2 8.7 7.2 8.7 V7.2 H4.8 V6.7 H8.4 C8.4 6.7 10 6.9 10 4.7 C10 2.5 8.6 2.6 8.6 2.6 H7.7 V3.8 C7.7 3.8 7.8 5.2 6.3 5.2 H3.8 C3.8 5.2 2.4 5.2 2.4 6.5 V8.5 C2.4 8.5 2.2 9.7 5 9.7 Z" fill="#3f8fbd"/></svg>
<svg class="a" style="left:56px;top:426.75px;" width="9" height="9" viewBox="0 0 9 9"><path d="M0 0.8 H7 M0 3 H6 M0 5.2 H8 M0 7.4 H5" stroke="#c5c5c5" stroke-width="1.1"/></svg>
<svg class="a" style="left:56px;top:445.1px;" width="9" height="9" viewBox="0 0 9 9"><path d="M0 0.8 H7 M0 3 H6 M0 5.2 H8 M0 7.4 H5" stroke="#c5c5c5" stroke-width="1.1"/></svg>
<svg class="a" style="left:53px;top:462.75px;" width="10" height="10" viewBox="0 0 10 10"><path d="M5 0.3 C2.6 0.3 2.8 1.3 2.8 1.3 V2.8 H5.2 V3.3 H1.6 C1.6 3.3 0 3.1 0 5.3 C0 7.5 1.4 7.4 1.4 7.4 H2.3 V6.2 C2.3 6.2 2.2 4.8 3.7 4.8 H6.2 C6.2 4.8 7.6 4.8 7.6 3.5 V1.5 C7.6 1.5 7.8 0.3 5 0.3 Z" fill="#4a9bc9"/>
<path d="M5 9.7 C7.4 9.7 7.2 8.7 7.2 8.7 V7.2 H4.8 V6.7 H8.4 C8.4 6.7 10 6.9 10 4.7 C10 2.5 8.6 2.6 8.6 2.6 H7.7 V3.8 C7.7 3.8 7.8 5.2 6.3 5.2 H3.8 C3.8 5.2 2.4 5.2 2.4 6.5 V8.5 C2.4 8.5 2.2 9.7 5 9.7 Z" fill="#3f8fbd"/></svg>
<svg class="a" style="left:53px;top:481.1px;" width="10" height="10" viewBox="0 0 10 10"><path d="M5 0.3 C2.6 0.3 2.8 1.3 2.8 1.3 V2.8 H5.2 V3.3 H1.6 C1.6 3.3 0 3.1 0 5.3 C0 7.5 1.4 7.4 1.4 7.4 H2.3 V6.2 C2.3 6.2 2.2 4.8 3.7 4.8 H6.2 C6.2 4.8 7.6 4.8 7.6 3.5 V1.5 C7.6 1.5 7.8 0.3 5 0.3 Z" fill="#4a9bc9"/>
<path d="M5 9.7 C7.4 9.7 7.2 8.7 7.2 8.7 V7.2 H4.8 V6.7 H8.4 C8.4 6.7 10 6.9 10 4.7 C10 2.5 8.6 2.6 8.6 2.6 H7.7 V3.8 C7.7 3.8 7.8 5.2 6.3 5.2 H3.8 C3.8 5.2 2.4 5.2 2.4 6.5 V8.5 C2.4 8.5 2.2 9.7 5 9.7 Z" fill="#3f8fbd"/></svg>
<svg class="a" style="left:56px;top:500.15000000000003px;" width="9" height="9" viewBox="0 0 9 9"><path d="M0 0.8 H7 M0 3 H6 M0 5.2 H8 M0 7.4 H5" stroke="#c5c5c5" stroke-width="1.1"/></svg>
<svg class="a" style="left:53px;top:517.8px;" width="10" height="10" viewBox="0 0 10 10"><path d="M5 0.3 C2.6 0.3 2.8 1.3 2.8 1.3 V2.8 H5.2 V3.3 H1.6 C1.6 3.3 0 3.1 0 5.3 C0 7.5 1.4 7.4 1.4 7.4 H2.3 V6.2 C2.3 6.2 2.2 4.8 3.7 4.8 H6.2 C6.2 4.8 7.6 4.8 7.6 3.5 V1.5 C7.6 1.5 7.8 0.3 5 0.3 Z" fill="#4a9bc9"/>
<path d="M5 9.7 C7.4 9.7 7.2 8.7 7.2 8.7 V7.2 H4.8 V6.7 H8.4 C8.4 6.7 10 6.9 10 4.7 C10 2.5 8.6 2.6 8.6 2.6 H7.7 V3.8 C7.7 3.8 7.8 5.2 6.3 5.2 H3.8 C3.8 5.2 2.4 5.2 2.4 6.5 V8.5 C2.4 8.5 2.2 9.7 5 9.7 Z" fill="#3f8fbd"/></svg>
<svg class="a" style="left:53px;top:536.1500000000001px;" width="10" height="10" viewBox="0 0 10 10"><path d="M5 0.3 C2.6 0.3 2.8 1.3 2.8 1.3 V2.8 H5.2 V3.3 H1.6 C1.6 3.3 0 3.1 0 5.3 C0 7.5 1.4 7.4 1.4 7.4 H2.3 V6.2 C2.3 6.2 2.2 4.8 3.7 4.8 H6.2 C6.2 4.8 7.6 4.8 7.6 3.5 V1.5 C7.6 1.5 7.8 0.3 5 0.3 Z" fill="#4a9bc9"/>
<path d="M5 9.7 C7.4 9.7 7.2 8.7 7.2 8.7 V7.2 H4.8 V6.7 H8.4 C8.4 6.7 10 6.9 10 4.7 C10 2.5 8.6 2.6 8.6 2.6 H7.7 V3.8 C7.7 3.8 7.8 5.2 6.3 5.2 H3.8 C3.8 5.2 2.4 5.2 2.4 6.5 V8.5 C2.4 8.5 2.2 9.7 5 9.7 Z" fill="#3f8fbd"/></svg>
<svg class="a" style="left:56px;top:555.2px;" width="9" height="9" viewBox="0 0 9 9"><path d="M0 0.8 H7 M0 3 H6 M0 5.2 H8 M0 7.4 H5" stroke="#c5c5c5" stroke-width="1.1"/></svg>
<svg class="a" style="left:53px;top:572.85px;" width="10" height="10" viewBox="0 0 10 10"><path d="M5 0.3 C2.6 0.3 2.8 1.3 2.8 1.3 V2.8 H5.2 V3.3 H1.6 C1.6 3.3 0 3.1 0 5.3 C0 7.5 1.4 7.4 1.4 7.4 H2.3 V6.2 C2.3 6.2 2.2 4.8 3.7 4.8 H6.2 C6.2 4.8 7.6 4.8 7.6 3.5 V1.5 C7.6 1.5 7.8 0.3 5 0.3 Z" fill="#4a9bc9"/>
<path d="M5 9.7 C7.4 9.7 7.2 8.7 7.2 8.7 V7.2 H4.8 V6.7 H8.4 C8.4 6.7 10 6.9 10 4.7 C10 2.5 8.6 2.6 8.6 2.6 H7.7 V3.8 C7.7 3.8 7.8 5.2 6.3 5.2 H3.8 C3.8 5.2 2.4 5.2 2.4 6.5 V8.5 C2.4 8.5 2.2 9.7 5 9.7 Z" fill="#3f8fbd"/></svg>
<svg class="a" style="left:53px;top:591.2px;" width="10" height="10" viewBox="0 0 10 10"><path d="M5 0.3 C2.6 0.3 2.8 1.3 2.8 1.3 V2.8 H5.2 V3.3 H1.6 C1.6 3.3 0 3.1 0 5.3 C0 7.5 1.4 7.4 1.4 7.4 H2.3 V6.2 C2.3 6.2 2.2 4.8 3.7 4.8 H6.2 C6.2 4.8 7.6 4.8 7.6 3.5 V1.5 C7.6 1.5 7.8 0.3 5 0.3 Z" fill="#4a9bc9"/>
<path d="M5 9.7 C7.4 9.7 7.2 8.7 7.2 8.7 V7.2 H4.8 V6.7 H8.4 C8.4 6.7 10 6.9 10 4.7 C10 2.5 8.6 2.6 8.6 2.6 H7.7 V3.8 C7.7 3.8 7.8 5.2 6.3 5.2 H3.8 C3.8 5.2 2.4 5.2 2.4 6.5 V8.5 C2.4 8.5 2.2 9.7 5 9.7 Z" fill="#3f8fbd"/></svg>
<svg class="a" style="left:240.6px;top:34px;" width="10" height="10" viewBox="0 0 10 10"><path d="M5 0.3 C2.6 0.3 2.8 1.3 2.8 1.3 V2.8 H5.2 V3.3 H1.6 C1.6 3.3 0 3.1 0 5.3 C0 7.5 1.4 7.4 1.4 7.4 H2.3 V6.2 C2.3 6.2 2.2 4.8 3.7 4.8 H6.2 C6.2 4.8 7.6 4.8 7.6 3.5 V1.5 C7.6 1.5 7.8 0.3 5 0.3 Z" fill="#4a9bc9"/>
<path d="M5 9.7 C7.4 9.7 7.2 8.7 7.2 8.7 V7.2 H4.8 V6.7 H8.4 C8.4 6.7 10 6.9 10 4.7 C10 2.5 8.6 2.6 8.6 2.6 H7.7 V3.8 C7.7 3.8 7.8 5.2 6.3 5.2 H3.8 C3.8 5.2 2.4 5.2 2.4 6.5 V8.5 C2.4 8.5 2.2 9.7 5 9.7 Z" fill="#3f8fbd"/></svg>
<svg class="a" style="left:379.5px;top:35px;" width="9" height="9" viewBox="0 0 9 9"><path d="M0 0.8 H7 M0 3 H6 M0 5.2 H8 M0 7.4 H5" stroke="#c5c5c5" stroke-width="1.1"/></svg>
<svg class="a" style="left:542.2px;top:35px;" width="9" height="9" viewBox="0 0 9 9"><path d="M0 0.8 H7 M0 3 H6 M0 5.2 H8 M0 7.4 H5" stroke="#c5c5c5" stroke-width="1.1"/></svg>
<svg class="a" style="left:639.7px;top:34.5px;" width="10" height="10" viewBox="0 0 10 10"><path d="M5 0.3 C2.6 0.3 2.8 1.3 2.8 1.3 V2.8 H5.2 V3.3 H1.6 C1.6 3.3 0 3.1 0 5.3 C0 7.5 1.4 7.4 1.4 7.4 H2.3 V6.2 C2.3 6.2 2.2 4.8 3.7 4.8 H6.2 C6.2 4.8 7.6 4.8 7.6 3.5 V1.5 C7.6 1.5 7.8 0.3 5 0.3 Z" fill="#4a9bc9"/>
<path d="M5 9.7 C7.4 9.7 7.2 8.7 7.2 8.7 V7.2 H4.8 V6.7 H8.4 C8.4 6.7 10 6.9 10 4.7 C10 2.5 8.6 2.6 8.6 2.6 H7.7 V3.8 C7.7 3.8 7.8 5.2 6.3 5.2 H3.8 C3.8 5.2 2.4 5.2 2.4 6.5 V8.5 C2.4 8.5 2.2 9.7 5 9.7 Z" fill="#3f8fbd"/></svg>
<svg class="a" style="left:769.4px;top:35px;" width="9" height="9" viewBox="0 0 9 9"><path d="M0 0.8 H7 M0 3 H6 M0 5.2 H8 M0 7.4 H5" stroke="#c5c5c5" stroke-width="1.1"/></svg>
<svg class="a" style="left:245.8px;top:57.5px;" width="10" height="10" viewBox="0 0 10 10"><path d="M5 0.3 C2.6 0.3 2.8 1.3 2.8 1.3 V2.8 H5.2 V3.3 H1.6 C1.6 3.3 0 3.1 0 5.3 C0 7.5 1.4 7.4 1.4 7.4 H2.3 V6.2 C2.3 6.2 2.2 4.8 3.7 4.8 H6.2 C6.2 4.8 7.6 4.8 7.6 3.5 V1.5 C7.6 1.5 7.8 0.3 5 0.3 Z" fill="#4a9bc9"/>
<path d="M5 9.7 C7.4 9.7 7.2 8.7 7.2 8.7 V7.2 H4.8 V6.7 H8.4 C8.4 6.7 10 6.9 10 4.7 C10 2.5 8.6 2.6 8.6 2.6 H7.7 V3.8 C7.7 3.8 7.8 5.2 6.3 5.2 H3.8 C3.8 5.2 2.4 5.2 2.4 6.5 V8.5 C2.4 8.5 2.2 9.7 5 9.7 Z" fill="#3f8fbd"/></svg>
<div class="t" style="left:36.20px;top:6.51px;font-family:'Liberation Sans',sans-serif;font-size:10.8px;font-weight:400;font-style:normal;color:#cccccc;transform:scaleX(0.9192);transform-origin:0 0;">File</div>
<div class="t" style="left:65.50px;top:6.51px;font-family:'Liberation Sans',sans-serif;font-size:10.8px;font-weight:400;font-style:normal;color:#cccccc;transform:scaleX(0.9673);transform-origin:0 0;">Edit</div>
<div class="t" style="left:97.00px;top:6.51px;font-family:'Liberation Sans',sans-serif;font-size:10.8px;font-weight:400;font-style:normal;color:#cccccc;transform:scaleX(0.9905);transform-origin:0 0;">Selection</div>
<div class="t" style="left:153.70px;top:6.51px;font-family:'Liberation Sans',sans-serif;font-size:10.8px;font-weight:400;font-style:normal;color:#cccccc;transform:scaleX(1.0121);transform-origin:0 0;">View</div>
<div class="t" style="left:190.50px;top:6.51px;font-family:'Liberation Sans',sans-serif;font-size:10.8px;font-weight:400;font-style:normal;color:#cccccc;transform:scaleX(0.9718);transform-origin:0 0;">Go</div>
<div class="t" style="left:217.70px;top:6.51px;font-family:'Liberation Sans',sans-serif;font-size:10.8px;font-weight:400;font-style:normal;color:#cccccc;transform:scaleX(0.9338);transform-origin:0 0;">Run</div>
<div class="t" style="left:250.00px;top:6.51px;font-family:'Liberation Sans',sans-serif;font-size:10.8px;font-weight:400;font-style:normal;color:#cccccc;transform:scaleX(0.9923);transform-origin:0 0;">Terminal</div>
<div class="t" style="left:303.70px;top:6.51px;font-family:'Liberation Sans',sans-serif;font-size:10.8px;font-weight:400;font-style:normal;color:#cccccc;transform:scaleX(0.9451);transform-origin:0 0;">Help</div>
<div class="t" style="left:536.00px;top:6.60px;font-family:'Liberation Sans',sans-serif;font-size:10px;font-weight:400;font-style:normal;color:#bbbbbb;transform:scaleX(0.9985);transform-origin:0 0;-webkit-text-stroke:0">workoutbanner.py - Fitness - Visual Studio Code</div>
<div class="t" style="left:57.00px;top:33.94px;font-family:'Liberation Sans',sans-serif;font-size:9.3px;font-weight:400;font-style:normal;color:#bbbbbb;transform:scaleX(0.8392);transform-origin:0 0;">EXPLORER</div>
<div class="t" style="left:57.00px;top:58.19px;font-family:'Liberation Sans',sans-serif;font-size:9.2px;font-weight:700;font-style:normal;color:#cccccc;transform:scaleX(0.9456);transform-origin:0 0;">OPEN EDITORS</div>
<div class="t" style="left:87.00px;top:75.61px;font-family:'Liberation Sans',sans-serif;font-size:11px;font-weight:400;font-style:italic;color:#cccccc;transform:scaleX(0.9880);transform-origin:0 0;">workoutbanner.py</div>
<div class="t" style="left:87.00px;top:94.11px;font-family:'Liberation Sans',sans-serif;font-size:11px;font-weight:400;font-style:normal;color:#cccccc;transform:scaleX(0.9990);transform-origin:0 0;">friendworkoutscreen.kv</div>
<div class="t" style="left:203.00px;top:95.10px;font-family:'Liberation Sans',sans-serif;font-size:10px;font-weight:400;font-style:normal;color:#8e8e8e;transform:scaleX(1.0500);transform-origin:0 0;">kv</div>
<div class="t" style="left:87.00px;top:112.31px;font-family:'Liberation Sans',sans-serif;font-size:11px;font-weight:400;font-style:normal;color:#cccccc;transform:scaleX(0.9893);transform-origin:0 0;">main.kv</div>
<div class="t" style="left:87.00px;top:130.61px;font-family:'Liberation Sans',sans-serif;font-size:11px;font-weight:400;font-style:normal;color:#cccccc;transform:scaleX(1.0087);transform-origin:0 0;">friendbanner.py</div>
<div class="t" style="left:87.00px;top:148.91px;font-family:'Liberation Sans',sans-serif;font-size:11px;font-weight:400;font-style:normal;color:#cccccc;transform:scaleX(0.9674);transform-origin:0 0;">friendslistscreen.kv</div>
<div class="t" style="left:182.00px;top:149.90px;font-family:'Liberation Sans',sans-serif;font-size:10px;font-weight:400;font-style:normal;color:#8e8e8e;transform:scaleX(1.0500);transform-origin:0 0;">kv</div>
<div class="t" style="left:57.00px;top:169.49px;font-family:'Liberation Sans',sans-serif;font-size:9.2px;font-weight:700;font-style:normal;color:#cccccc;transform:scaleX(0.9408);transform-origin:0 0;">FITNESS</div>
<div class="t" style="left:68.00px;top:187.11px;font-family:'Liberation Sans',sans-serif;font-size:11px;font-weight:400;font-style:normal;color:#cccccc;transform:scaleX(0.8938);transform-origin:0 0;">__pycache__</div>
<div class="t" style="left:68.00px;top:205.46px;font-family:'Liberation Sans',sans-serif;font-size:11px;font-weight:400;font-style:normal;color:#cccccc;transform:scaleX(0.9927);transform-origin:0 0;">icons</div>
<div class="t" style="left:68.00px;top:223.81px;font-family:'Liberation Sans',sans-serif;font-size:11px;font-weight:400;font-style:normal;color:#cccccc;transform:scaleX(1.0455);transform-origin:0 0;">kv</div>
<div class="t" style="left:75.00px;top:242.16px;font-family:'Liberation Sans',sans-serif;font-size:11px;font-weight:400;font-style:normal;color:#cccccc;transform:scaleX(0.9736);transform-origin:0 0;">addfriendscreen.kv</div>
<div class="t" style="left:75.00px;top:260.51px;font-family:'Liberation Sans',sans-serif;font-size:11px;font-weight:400;font-style:normal;color:#cccccc;transform:scaleX(0.9860);transform-origin:0 0;">addworkoutscreen.kv</div>
<div class="t" style="left:75.00px;top:278.86px;font-family:'Liberation Sans',sans-serif;font-size:11px;font-weight:400;font-style:normal;color:#cccccc;transform:scaleX(0.9540);transform-origin:0 0;">changeavatarscreen.kv</div>
<div class="t" style="left:75.00px;top:297.21px;font-family:'Liberation Sans',sans-serif;font-size:11px;font-weight:400;font-style:normal;color:#cccccc;transform:scaleX(0.9674);transform-origin:0 0;">friendslistscreen.kv</div>
<div class="t" style="left:75.00px;top:315.56px;font-family:'Liberation Sans',sans-serif;font-size:11px;font-weight:400;font-style:normal;color:#cccccc;transform:scaleX(0.9946);transform-origin:0 0;">friendworkoutscreen.kv</div>
<div class="t" style="left:75.00px;top:333.91px;font-family:'Liberation Sans',sans-serif;font-size:11px;font-weight:400;font-style:normal;color:#cccccc;transform:scaleX(0.9652);transform-origin:0 0;">homescreen.kv</div>
<div class="t" style="left:75.00px;top:352.26px;font-family:'Liberation Sans',sans-serif;font-size:11px;font-weight:400;font-style:normal;color:#cccccc;transform:scaleX(0.9740);transform-origin:0 0;">loginscreen.kv</div>
<div class="t" style="left:75.00px;top:370.61px;font-family:'Liberation Sans',sans-serif;font-size:11px;font-weight:400;font-style:normal;color:#cccccc;transform:scaleX(0.9708);transform-origin:0 0;">settingsscreen.kv</div>
<div class="t" style="left:68.00px;top:388.96px;font-family:'Liberation Sans',sans-serif;font-size:11px;font-weight:400;font-style:normal;color:#cccccc;transform:scaleX(1.0024);transform-origin:0 0;">buildozer.spec</div>
<div class="t" style="left:68.00px;top:407.31px;font-family:'Liberation Sans',sans-serif;font-size:11px;font-weight:400;font-style:normal;color:#cccccc;transform:scaleX(1.0323);transform-origin:0 0;">error.py</div>
<div class="t" style="left:68.00px;top:425.66px;font-family:'Liberation Sans',sans-serif;font-size:11px;font-weight:400;font-style:normal;color:#cccccc;transform:scaleX(0.9851);transform-origin:0 0;">firebaserules.txt</div>
<div class="t" style="left:68.00px;top:444.01px;font-family:'Liberation Sans',sans-serif;font-size:11px;font-weight:400;font-style:normal;color:#cccccc;transform:scaleX(0.9792);transform-origin:0 0;">fitness.apk</div>
<div class="t" style="left:68.00px;top:462.36px;font-family:'Liberation Sans',sans-serif;font-size:11px;font-weight:400;font-style:normal;color:#cccccc;transform:scaleX(1.0087);transform-origin:0 0;">friendbanner.py</div>
<div class="t" style="left:68.00px;top:480.71px;font-family:'Liberation Sans',sans-serif;font-size:11px;font-weight:400;font-style:normal;color:#cccccc;transform:scaleX(1.0025);transform-origin:0 0;">helperfunctions.py</div>
<div class="t" style="left:68.00px;top:499.06px;font-family:'Liberation Sans',sans-serif;font-size:11px;font-weight:400;font-style:normal;color:#cccccc;transform:scaleX(0.9893);transform-origin:0 0;">main.kv</div>
<div class="t" style="left:68.00px;top:517.41px;font-family:'Liberation Sans',sans-serif;font-size:11px;font-weight:400;font-style:normal;color:#cccccc;transform:scaleX(0.9992);transform-origin:0 0;">main.py</div>
<div class="t" style="left:68.00px;top:535.76px;font-family:'Liberation Sans',sans-serif;font-size:11px;font-weight:400;font-style:normal;color:#cccccc;transform:scaleX(0.9856);transform-origin:0 0;">myfirebase.py</div>
<div class="t" style="left:68.00px;top:554.11px;font-family:'Liberation Sans',sans-serif;font-size:11px;font-weight:400;font-style:normal;color:#cccccc;transform:scaleX(0.9825);transform-origin:0 0;">refresh_token.txt</div>
<div class="t" style="left:68.00px;top:572.46px;font-family:'Liberation Sans',sans-serif;font-size:11px;font-weight:400;font-style:normal;color:#cccccc;transform:scaleX(0.9941);transform-origin:0 0;">specialbuttons.py</div>
<div class="t" style="left:68.00px;top:590.81px;font-family:'Liberation Sans',sans-serif;font-size:11px;font-weight:400;font-style:normal;color:#cccccc;transform:scaleX(1.0191);transform-origin:0 0;">workoutbanner.py</div>
<div class="t" style="left:57.00px;top:657.49px;font-family:'Liberation Sans',sans-serif;font-size:9.2px;font-weight:700;font-style:normal;color:#cccccc;transform:scaleX(0.9795);transform-origin:0 0;">OUTLINE</div>
<div class="t" style="left:255.60px;top:33.61px;font-family:'Liberation Sans',sans-serif;font-size:11px;font-weight:400;font-style:italic;color:#ffffff;transform:scaleX(0.9937);transform-origin:0 0;">workoutbanner.py</div>
<div class="t" style="left:392.20px;top:34.01px;font-family:'Liberation Sans',sans-serif;font-size:11px;font-weight:400;font-style:normal;color:#9d9d9d;transform:scaleX(0.9902);transform-origin:0 0;">friendworkoutscreen.kv</div>
<div class="t" style="left:554.70px;top:34.01px;font-family:'Liberation Sans',sans-serif;font-size:11px;font-weight:400;font-style:normal;color:#9d9d9d;transform:scaleX(0.9814);transform-origin:0 0;">main.kv</div>
<div class="t" style="left:655.30px;top:34.01px;font-family:'Liberation Sans',sans-serif;font-size:11px;font-weight:400;font-style:normal;color:#9d9d9d;transform:scaleX(1.0021);transform-origin:0 0;">friendbanner.py</div>
<div class="t" style="left:781.90px;top:34.01px;font-family:'Liberation Sans',sans-serif;font-size:11px;font-weight:400;font-style:normal;color:#9d9d9d;transform:scaleX(0.9674);transform-origin:0 0;">friendslistscreen.kv</div>
<div class="t" style="left:261.00px;top:57.21px;font-family:'Liberation Sans',sans-serif;font-size:11px;font-weight:400;font-style:normal;color:#a9a9a9;transform:scaleX(1.0133);transform-origin:0 0;">workoutbanner.py</div>
<div class="t" style="left:377.50px;top:57.21px;font-family:'Liberation Sans',sans-serif;font-size:11px;font-weight:400;font-style:normal;color:#a9a9a9;transform:scaleX(0.9838);transform-origin:0 0;">WorkoutBanner</div>
<div class="t" style="left:480.00px;top:57.21px;font-family:'Liberation Sans',sans-serif;font-size:11px;font-weight:400;font-style:normal;color:#a9a9a9;transform:scaleX(0.9210);transform-origin:0 0;">__init__</div>
<div class="t" style="left:251.18px;top:76.44px;font-family:'Liberation Mono',monospace;font-size:10.68px;font-weight:400;font-style:normal;color:#858585;transform:scaleX(1.0006);transform-origin:0 0;">18</div>
<div class="t" style="left:251.18px;top:92.32px;font-family:'Liberation Mono',monospace;font-size:10.68px;font-weight:400;font-style:normal;color:#858585;transform:scaleX(1.0006);transform-origin:0 0;">19</div>
<div class="t" style="left:251.18px;top:108.20px;font-family:'Liberation Mono',monospace;font-size:10.68px;font-weight:400;font-style:normal;color:#858585;transform:scaleX(1.0006);transform-origin:0 0;">20</div>
<div class="t" style="left:251.18px;top:124.08px;font-family:'Liberation Mono',monospace;font-size:10.68px;font-weight:400;font-style:normal;color:#858585;transform:scaleX(1.0006);transform-origin:0 0;">21</div>
<div class="t" style="left:251.18px;top:139.96px;font-family:'Liberation Mono',monospace;font-size:10.68px;font-weight:400;font-style:normal;color:#858585;transform:scaleX(1.0006);transform-origin:0 0;">22</div>
<div class="t" style="left:251.18px;top:155.84px;font-family:'Liberation Mono',monospace;font-size:10.68px;font-weight:400;font-style:normal;color:#858585;transform:scaleX(1.0006);transform-origin:0 0;">23</div>
<div class="t" style="left:251.18px;top:171.72px;font-family:'Liberation Mono',monospace;font-size:10.68px;font-weight:400;font-style:normal;color:#858585;transform:scaleX(1.0006);transform-origin:0 0;">24</div>
<div class="t" style="left:251.18px;top:187.60px;font-family:'Liberation Mono',monospace;font-size:10.68px;font-weight:400;font-style:normal;color:#858585;transform:scaleX(1.0006);transform-origin:0 0;">25</div>
<div class="t" style="left:251.18px;top:203.48px;font-family:'Liberation Mono',monospace;font-size:10.68px;font-weight:400;font-style:normal;color:#858585;transform:scaleX(1.0006);transform-origin:0 0;">26</div>
<div class="t" style="left:251.18px;top:219.36px;font-family:'Liberation Mono',monospace;font-size:10.68px;font-weight:400;font-style:normal;color:#858585;transform:scaleX(1.0006);transform-origin:0 0;">27</div>
<div class="t" style="left:251.18px;top:235.24px;font-family:'Liberation Mono',monospace;font-size:10.68px;font-weight:400;font-style:normal;color:#858585;transform:scaleX(1.0006);transform-origin:0 0;">28</div>
<div class="t" style="left:251.18px;top:251.12px;font-family:'Liberation Mono',monospace;font-size:10.68px;font-weight:400;font-style:normal;color:#858585;transform:scaleX(1.0006);transform-origin:0 0;">29</div>
<div class="t" style="left:251.18px;top:267.00px;font-family:'Liberation Mono',monospace;font-size:10.68px;font-weight:400;font-style:normal;color:#858585;transform:scaleX(1.0006);transform-origin:0 0;">30</div>
<div class="t" style="left:251.18px;top:282.88px;font-family:'Liberation Mono',monospace;font-size:10.68px;font-weight:400;font-style:normal;color:#858585;transform:scaleX(1.0006);transform-origin:0 0;">31</div>
<div class="t" style="left:251.18px;top:298.76px;font-family:'Liberation Mono',monospace;font-size:10.68px;font-weight:400;font-style:normal;color:#858585;transform:scaleX(1.0006);transform-origin:0 0;">32</div>
<div class="t" style="left:251.18px;top:314.64px;font-family:'Liberation Mono',monospace;font-size:10.68px;font-weight:400;font-style:normal;color:#858585;transform:scaleX(1.0006);transform-origin:0 0;">33</div>
<div class="t" style="left:251.18px;top:330.52px;font-family:'Liberation Mono',monospace;font-size:10.68px;font-weight:400;font-style:normal;color:#858585;transform:scaleX(1.0006);transform-origin:0 0;">34</div>
<div class="t" style="left:251.18px;top:346.40px;font-family:'Liberation Mono',monospace;font-size:10.68px;font-weight:400;font-style:normal;color:#858585;transform:scaleX(1.0006);transform-origin:0 0;">35</div>
<div class="t" style="left:251.18px;top:362.28px;font-family:'Liberation Mono',monospace;font-size:10.68px;font-weight:400;font-style:normal;color:#c6c6c6;transform:scaleX(1.0006);transform-origin:0 0;">36</div>
<div class="t" style="left:251.18px;top:378.16px;font-family:'Liberation Mono',monospace;font-size:10.68px;font-weight:400;font-style:normal;color:#858585;transform:scaleX(1.0006);transform-origin:0 0;">37</div>
<div class="t" style="left:251.18px;top:394.04px;font-family:'Liberation Mono',monospace;font-size:10.68px;font-weight:400;font-style:normal;color:#858585;transform:scaleX(1.0006);transform-origin:0 0;">38</div>
<div class="t" style="left:251.18px;top:409.92px;font-family:'Liberation Mono',monospace;font-size:10.68px;font-weight:400;font-style:normal;color:#858585;transform:scaleX(1.0006);transform-origin:0 0;">39</div>
<div class="t" style="left:251.18px;top:425.80px;font-family:'Liberation Mono',monospace;font-size:10.68px;font-weight:400;font-style:normal;color:#858585;transform:scaleX(1.0006);transform-origin:0 0;">40</div>
<div class="t" style="left:251.18px;top:441.68px;font-family:'Liberation Mono',monospace;font-size:10.68px;font-weight:400;font-style:normal;color:#858585;transform:scaleX(1.0006);transform-origin:0 0;">41</div>
<div class="t" style="left:251.18px;top:457.56px;font-family:'Liberation Mono',monospace;font-size:10.68px;font-weight:400;font-style:normal;color:#858585;transform:scaleX(1.0006);transform-origin:0 0;">42</div>
<div class="t" style="left:251.18px;top:473.44px;font-family:'Liberation Mono',monospace;font-size:10.68px;font-weight:400;font-style:normal;color:#858585;transform:scaleX(1.0006);transform-origin:0 0;">43</div>
<div class="t" style="left:796.19px;top:155.84px;font-family:'Liberation Mono',monospace;font-size:10.68px;font-weight:400;font-style:normal;color:#cccccc;transform:scaleX(1.0007);transform-origin:0 0;"><span style="color:#9cdcfe">size_hint</span><span style="color:#d4d4d4">=(</span><span style="color:#b5cea8">1</span><span style="color:#d4d4d4">, </span><span style="color:#b5cea8">0.5</span><span style="color:#d4d4d4">), </span><span style="color:#9cdcfe">pos_hint</span><span style="color:#d4d4d4">={</span><span style="color:#ce9178">&quot;top&quot;</span><span style="color:#d4d4d4">: </span><span style="color:#b5cea8">.75</span><span style="color:#d4d4d4">, </span><span style="color:#ce9178">&quot;right&quot;</span><span style="color:#d4d4d4">: </span><span style="color:#b5cea8">1</span><span style="color:#d4d4d4">})</span></div>
<div class="t" style="left:764.14px;top:171.72px;font-family:'Liberation Mono',monospace;font-size:10.68px;font-weight:400;font-style:normal;color:#cccccc;transform:scaleX(1.0007);transform-origin:0 0;"><span style="color:#9cdcfe">pos_hint</span><span style="color:#d4d4d4">={</span><span style="color:#ce9178">&quot;top&quot;</span><span style="color:#d4d4d4">: </span><span style="color:#b5cea8">.225</span><span style="color:#d4d4d4">, </span><span style="color:#ce9178">&quot;right&quot;</span><span style="color:#d4d4d4">: </span><span style="color:#b5cea8">1</span><span style="color:#d4d4d4">})</span></div>
<div class="t" style="left:732.09px;top:267.00px;font-family:'Liberation Mono',monospace;font-size:10.68px;font-weight:400;font-style:normal;color:#cccccc;transform:scaleX(1.0009);transform-origin:0 0;"><span style="color:#6a9955">pos_hint={&quot;top&quot;: .975, &quot;right&quot;: 1})</span></div>
<div class="t" style="left:789.78px;top:282.88px;font-family:'Liberation Mono',monospace;font-size:10.68px;font-weight:400;font-style:normal;color:#cccccc;transform:scaleX(1.0007);transform-origin:0 0;"><span style="color:#9cdcfe">pos_hint</span><span style="color:#d4d4d4">={</span><span style="color:#ce9178">&quot;top&quot;</span><span style="color:#d4d4d4">: </span><span style="color:#b5cea8">.75</span><span style="color:#d4d4d4">, </span><span style="color:#ce9178">&quot;right&quot;</span><span style="color:#d4d4d4">: </span><span style="color:#b5cea8">1</span><span style="color:#d4d4d4">})</span></div>
<div class="t" style="left:809.01px;top:298.76px;font-family:'Liberation Mono',monospace;font-size:10.68px;font-weight:400;font-style:normal;color:#cccccc;transform:scaleX(1.0007);transform-origin:0 0;"><span style="color:#9cdcfe">size_hint</span><span style="color:#d4d4d4">=(</span><span style="color:#b5cea8">1</span><span style="color:#d4d4d4">, </span><span style="color:#b5cea8">.2</span><span style="color:#d4d4d4">), </span><span style="color:#9cdcfe">pos_hint</span><span style="color:#d4d4d4">={</span><span style="color:#ce9178">&quot;top&quot;</span><span style="color:#d4d4d4">: </span><span style="color:#b5cea8">.225</span><span style="color:#d4d4d4">, </span><span style="color:#ce9178">&quot;right&quot;</span><span style="color:#d4d4d4">: </span><span style="color:#b5cea8">1</span><span style="color:#d4d4d4">})</span></div>
<div class="t" style="left:815.42px;top:409.92px;font-family:'Liberation Mono',monospace;font-size:10.68px;font-weight:400;font-style:normal;color:#cccccc;transform:scaleX(1.0007);transform-origin:0 0;"><span style="color:#d4d4d4">), </span><span style="color:#9cdcfe">pos_hint</span><span style="color:#d4d4d4">={</span><span style="color:#ce9178">&quot;top&quot;</span><span style="color:#d4d4d4">: </span><span style="color:#b5cea8">.75</span><span style="color:#d4d4d4">, </span><span style="color:#ce9178">&quot;right&quot;</span><span style="color:#d4d4d4">: </span><span style="color:#b5cea8">1</span><span style="color:#d4d4d4">})</span></div>
<div class="t" style="left:776.96px;top:425.80px;font-family:'Liberation Mono',monospace;font-size:10.68px;font-weight:400;font-style:normal;color:#cccccc;transform:scaleX(1.0007);transform-origin:0 0;"><span style="color:#9cdcfe">size_hint</span><span style="color:#d4d4d4">=(</span><span style="color:#b5cea8">1</span><span style="color:#d4d4d4">, </span><span style="color:#b5cea8">.2</span><span style="color:#d4d4d4">), </span><span style="color:#9cdcfe">pos_hint</span><span style="color:#d4d4d4">={</span><span style="color:#ce9178">&quot;top&quot;</span><span style="color:#d4d4d4">: </span><span style="color:#b5cea8">.225</span><span style="color:#d4d4d4">, </span><span style="color:#ce9178">&quot;right&quot;</span><span style="color:#d4d4d4">: </span><span style="color:#b5cea8">1</span><span style="color:#d4d4d4">})</span></div>
<div class="t" style="left:363.72px;top:76.44px;font-family:'Liberation Mono',monospace;font-size:10.68px;font-weight:400;font-style:normal;color:#cccccc;transform:scaleX(1.0007);transform-origin:0 0;"><span style="color:#569cd6">self</span><span style="color:#d4d4d4">.rect = Rectangle(</span><span style="color:#9cdcfe">size</span><span style="color:#d4d4d4">=</span><span style="color:#569cd6">self</span><span style="color:#d4d4d4">.size, </span><span style="color:#9cdcfe">pos</span><span style="color:#d4d4d4">=</span><span style="color:#569cd6">self</span><span style="color:#d4d4d4">.pos)</span></div>
<div class="t" style="left:338.08px;top:92.32px;font-family:'Liberation Mono',monospace;font-size:10.68px;font-weight:400;font-style:normal;color:#cccccc;transform:scaleX(1.0007);transform-origin:0 0;"><span style="color:#569cd6">self</span><span style="color:#d4d4d4">.bind(</span><span style="color:#9cdcfe">pos</span><span style="color:#d4d4d4">=</span><span style="color:#569cd6">self</span><span style="color:#d4d4d4">.update_rect, </span><span style="color:#9cdcfe">size</span><span style="color:#d4d4d4">=</span><span style="color:#569cd6">self</span><span style="color:#d4d4d4">.update_rect)</span></div>
<div class="t" style="left:338.08px;top:124.08px;font-family:'Liberation Mono',monospace;font-size:10.68px;font-weight:400;font-style:normal;color:#cccccc;transform:scaleX(1.0009);transform-origin:0 0;"><span style="color:#6a9955"># Need left FloatLayout</span></div>
<div class="t" style="left:338.08px;top:139.96px;font-family:'Liberation Mono',monospace;font-size:10.68px;font-weight:400;font-style:normal;color:#cccccc;transform:scaleX(1.0008);transform-origin:0 0;"><span style="color:#d4d4d4">left = FloatLayout()</span></div>
<div class="t" style="left:338.08px;top:155.84px;font-family:'Liberation Mono',monospace;font-size:10.68px;font-weight:400;font-style:normal;color:#cccccc;transform:scaleX(1.0008);transform-origin:0 0;"><span style="color:#d4d4d4">left_image = Image(</span><span style="color:#9cdcfe">source</span><span style="color:#d4d4d4">=</span><span style="color:#ce9178">&quot;icons/&quot; + kwargs[&quot;workout_image&quot;]</span><span style="color:#d4d4d4">, </span></div>
<div class="t" style="left:338.08px;top:171.72px;font-family:'Liberation Mono',monospace;font-size:10.68px;font-weight:400;font-style:normal;color:#cccccc;transform:scaleX(1.0008);transform-origin:0 0;"><span style="color:#d4d4d4">left_label = Label(</span><span style="color:#9cdcfe">text</span><span style="color:#d4d4d4">=kwargs[</span><span style="color:#ce9178">&quot;description&quot;</span><span style="color:#d4d4d4">], </span></div>
<div class="t" style="left:338.08px;top:187.60px;font-family:'Liberation Mono',monospace;font-size:10.68px;font-weight:400;font-style:normal;color:#cccccc;transform:scaleX(1.0009);transform-origin:0 0;"><span style="color:#d4d4d4">left.add_widget(left_image)</span></div>
<div class="t" style="left:338.08px;top:203.48px;font-family:'Liberation Mono',monospace;font-size:10.68px;font-weight:400;font-style:normal;color:#cccccc;transform:scaleX(1.0009);transform-origin:0 0;"><span style="color:#d4d4d4">left.add_widget(left_label)</span></div>
<div class="t" style="left:338.08px;top:235.24px;font-family:'Liberation Mono',monospace;font-size:10.68px;font-weight:400;font-style:normal;color:#cccccc;transform:scaleX(1.0009);transform-origin:0 0;"><span style="color:#6a9955"># Need middle FloatLayout</span></div>
<div class="t" style="left:338.08px;top:251.12px;font-family:'Liberation Mono',monospace;font-size:10.68px;font-weight:400;font-style:normal;color:#cccccc;transform:scaleX(1.0008);transform-origin:0 0;"><span style="color:#d4d4d4">middle = FloatLayout()</span></div>
<div class="t" style="left:338.08px;top:267.00px;font-family:'Liberation Mono',monospace;font-size:10.68px;font-weight:400;font-style:normal;color:#cccccc;transform:scaleX(1.0009);transform-origin:0 0;"><span style="color:#6a9955">#middle_date = Label(text=kwargs[&quot;date&quot;], </span></div>
<div class="t" style="left:338.08px;top:282.88px;font-family:'Liberation Mono',monospace;font-size:10.68px;font-weight:400;font-style:normal;color:#cccccc;transform:scaleX(1.0007);transform-origin:0 0;"><span style="color:#d4d4d4">middle_image = Image(</span><span style="color:#9cdcfe">source</span><span style="color:#d4d4d4">=kwargs[</span><span style="color:#ce9178">&quot;image&quot;</span><span style="color:#d4d4d4">], </span></div>
<div class="t" style="left:338.08px;top:298.76px;font-family:'Liberation Mono',monospace;font-size:10.68px;font-weight:400;font-style:normal;color:#cccccc;transform:scaleX(1.0008);transform-origin:0 0;"><span style="color:#d4d4d4">middle_label = Label(</span><span style="color:#9cdcfe">text</span><span style="color:#d4d4d4">=</span><span style="color:#4ec9b0">str</span><span style="color:#d4d4d4">(kwargs[</span><span style="color:#ce9178">&quot;number&quot;</span><span style="color:#d4d4d4">]), </span></div>
<div class="t" style="left:338.08px;top:314.64px;font-family:'Liberation Mono',monospace;font-size:10.68px;font-weight:400;font-style:normal;color:#cccccc;transform:scaleX(1.0009);transform-origin:0 0;"><span style="color:#6a9955">#middle.add_widget(middle_date)</span></div>
<div class="t" style="left:338.08px;top:330.52px;font-family:'Liberation Mono',monospace;font-size:10.68px;font-weight:400;font-style:normal;color:#cccccc;transform:scaleX(1.0009);transform-origin:0 0;"><span style="color:#d4d4d4">middle.add_widget(middle_image)</span></div>
<div class="t" style="left:338.08px;top:346.40px;font-family:'Liberation Mono',monospace;font-size:10.68px;font-weight:400;font-style:normal;color:#cccccc;transform:scaleX(1.0009);transform-origin:0 0;"><span style="color:#d4d4d4">middle.add_widget(middle_label)</span></div>
<div class="t" style="left:338.08px;top:378.16px;font-family:'Liberation Mono',monospace;font-size:10.68px;font-weight:400;font-style:normal;color:#cccccc;transform:scaleX(1.0009);transform-origin:0 0;"><span style="color:#6a9955"># Need right FloatLayout</span></div>
<div class="t" style="left:338.08px;top:394.04px;font-family:'Liberation Mono',monospace;font-size:10.68px;font-weight:400;font-style:normal;color:#cccccc;transform:scaleX(1.0008);transform-origin:0 0;"><span style="color:#d4d4d4">right = FloatLayout()</span></div>
<div class="t" style="left:338.08px;top:409.92px;font-family:'Liberation Mono',monospace;font-size:10.68px;font-weight:400;font-style:normal;color:#cccccc;transform:scaleX(1.0008);transform-origin:0 0;"><span style="color:#d4d4d4">right_image = Image(</span><span style="color:#9cdcfe">source</span><span style="color:#d4d4d4">=</span><span style="color:#ce9178">&quot;icons/likes.png&quot;</span><span style="color:#d4d4d4">, </span></div>
<div class="t" style="left:338.08px;top:425.80px;font-family:'Liberation Mono',monospace;font-size:10.68px;font-weight:400;font-style:normal;color:#cccccc;transform:scaleX(1.0007);transform-origin:0 0;"><span style="color:#569cd6">self</span><span style="color:#d4d4d4">.right_label = Label(</span><span style="color:#9cdcfe">text</span><span style="color:#d4d4d4">=</span><span style="color:#ce9178">&quot;0 high-fives&quot;</span><span style="color:#d4d4d4">, </span></div>
<div class="t" style="left:338.08px;top:441.68px;font-family:'Liberation Mono',monospace;font-size:10.68px;font-weight:400;font-style:normal;color:#cccccc;transform:scaleX(1.0008);transform-origin:0 0;"><span style="color:#d4d4d4">right.add_widget(right_image)</span></div>
<div class="t" style="left:338.08px;top:457.56px;font-family:'Liberation Mono',monospace;font-size:10.68px;font-weight:400;font-style:normal;color:#cccccc;transform:scaleX(1.0008);transform-origin:0 0;"><span style="color:#d4d4d4">right.add_widget(</span><span style="color:#569cd6">self</span><span style="color:#d4d4d4">.right_label)</span></div>
<div class="t" style="left:245.70px;top:495.49px;font-family:'Liberation Sans',sans-serif;font-size:9.2px;font-weight:400;font-style:normal;color:#9a9a9a;transform:scaleX(0.8911);transform-origin:0 0;">PROBLEMS</div>
<div class="t" style="left:302.25px;top:494.95px;font-family:'Liberation Sans',sans-serif;font-size:9.5px;font-weight:400;font-style:normal;color:#ffffff;transform:scaleX(1.0383);transform-origin:0 0;">5</div>
<div class="t" style="left:329.00px;top:495.49px;font-family:'Liberation Sans',sans-serif;font-size:9.2px;font-weight:400;font-style:normal;color:#9a9a9a;transform:scaleX(0.9132);transform-origin:0 0;">OUTPUT</div>
<div class="t" style="left:380.50px;top:495.49px;font-family:'Liberation Sans',sans-serif;font-size:9.2px;font-weight:400;font-style:normal;color:#9a9a9a;transform:scaleX(0.8920);transform-origin:0 0;">DEBUG CONSOLE</div>
<div class="t" style="left:468.50px;top:495.49px;font-family:'Liberation Sans',sans-serif;font-size:9.2px;font-weight:400;font-style:normal;color:#e7e7e7;transform:scaleX(0.9254);transform-origin:0 0;">TERMINAL</div>
<div class="t" style="left:1002.00px;top:495.01px;font-family:'Liberation Sans',sans-serif;font-size:10.8px;font-weight:400;font-style:normal;color:#f0f0f0;transform:scaleX(1.0243);transform-origin:0 0;">1: python</div>
<div class="t" style="left:246.30px;top:522.48px;font-family:'Liberation Mono',monospace;font-size:10.05px;font-weight:400;font-style:normal;color:#cccccc;transform:scaleX(1.0001);transform-origin:0 0;">DATA IS {&#x27;avatar&#x27;: &#x27;man.png&#x27;, &#x27;friends&#x27;: &#x27;,7,8,1</div>
<div class="t" style="left:825.18px;top:522.48px;font-family:'Liberation Mono',monospace;font-size:10.05px;font-weight:400;font-style:normal;color:#cccccc;transform:scaleX(1.0001);transform-origin:0 0;">g&#x27;}, &#x27;streak&#x27;: &#x27;0&#x27;, &#x27;workouts&#x27;: {&#x27;-MVCvviiB_WkVubwpu9Y&#x27;: {&#x27;date&#x27;: &#x27;2/2/20</div>
<div class="t" style="left:246.30px;top:535.91px;font-family:'Liberation Mono',monospace;font-size:10.05px;font-weight:400;font-style:normal;color:#cccccc;transform:scaleX(1.0001);transform-origin:0 0;">21&#x27;, &#x27;description&#x27;: &#x27;ererr&#x27;, &#x27;likes&#x27;: 0, &#x27;number</div>
<div class="t" style="left:825.18px;top:535.91px;font-family:'Liberation Mono',monospace;font-size:10.05px;font-weight:400;font-style:normal;color:#cccccc;transform:scaleX(1.0001);transform-origin:0 0;">&#x27;units&#x27;: &#x27;min&#x27;, &#x27;workout_image&#x27;: &#x27;boxing.png&#x27;}}}</div>
<div class="t" style="left:246.30px;top:549.34px;font-family:'Liberation Mono',monospace;font-size:10.05px;font-weight:400;font-style:normal;color:#cccccc;transform:scaleX(0.9998);transform-origin:0 0;">man.png</div>
<div class="t" style="left:246.30px;top:562.77px;font-family:'Liberation Mono',monospace;font-size:10.05px;font-weight:400;font-style:normal;color:#cccccc;transform:scaleX(0.9998);transform-origin:0 0;">man.png</div>
<div class="t" style="left:246.30px;top:576.20px;font-family:'Liberation Mono',monospace;font-size:10.05px;font-weight:400;font-style:normal;color:#cccccc;transform:scaleX(0.9998);transform-origin:0 0;">man.png</div>
<div class="t" style="left:246.30px;top:589.63px;font-family:'Liberation Mono',monospace;font-size:10.05px;font-weight:400;font-style:normal;color:#cccccc;transform:scaleX(1.0001);transform-origin:0 0;">[<span style="color:#23d18b;font-weight:700">INFO</span>   ] [Base        ] Start application main loop</div>
<div class="t" style="left:246.30px;top:603.06px;font-family:'Liberation Mono',monospace;font-size:10.05px;font-weight:400;font-style:normal;color:#cccccc;transform:scaleX(1.0001);transform-origin:0 0;">Released settings button</div>
<div class="t" style="left:246.30px;top:616.49px;font-family:'Liberation Mono',monospace;font-size:10.05px;font-weight:400;font-style:normal;color:#cccccc;transform:scaleX(1.0001);transform-origin:0 0;">Released settings button</div>
<div class="t" style="left:246.30px;top:629.92px;font-family:'Liberation Mono',monospace;font-size:10.05px;font-weight:400;font-style:normal;color:#cccccc;transform:scaleX(1.0001);transform-origin:0 0;">Released settings button</div>
<div class="t" style="left:246.30px;top:643.35px;font-family:'Liberation Mono',monospace;font-size:10.05px;font-weight:400;font-style:normal;color:#cccccc;transform:scaleX(1.0001);transform-origin:0 0;">Released settings button</div>
<div class="t" style="left:35.40px;top:673.91px;font-family:'Liberation Sans',sans-serif;font-size:10.8px;font-weight:400;font-style:normal;color:#ffffff;transform:scaleX(0.9346);transform-origin:0 0;">Python 3.8.5 32-bit (&#x27;face-recognize-img-vid-wex-i9Ht&#x27;: virtualenvwrapper)</div>
<div class="t" style="left:391.50px;top:673.91px;font-family:'Liberation Sans',sans-serif;font-size:10.8px;font-weight:400;font-style:normal;color:#ffffff;transform:scaleX(0.9974);transform-origin:0 0;">0</div>
<div class="t" style="left:415.00px;top:673.91px;font-family:'Liberation Sans',sans-serif;font-size:10.8px;font-weight:400;font-style:normal;color:#ffffff;transform:scaleX(0.9974);transform-origin:0 0;">0</div>
<div class="t" style="left:436.00px;top:673.91px;font-family:'Liberation Sans',sans-serif;font-size:10.8px;font-weight:400;font-style:normal;color:#ffffff;transform:scaleX(0.9974);transform-origin:0 0;">5</div>
<div class="t" style="left:455.00px;top:673.91px;font-family:'Liberation Sans',sans-serif;font-size:10.8px;font-weight:400;font-style:normal;color:#ffffff;transform:scaleX(0.9012);transform-origin:0 0;">KvLang Python</div>
<div class="t" style="left:996.00px;top:673.71px;font-family:'Liberation Sans',sans-serif;font-size:10.8px;font-weight:400;font-style:normal;color:#ffffff;transform:scaleX(0.8929);transform-origin:0 0;">Ln 36, Col 1</div>
<div class="t" style="left:1061.40px;top:673.71px;font-family:'Liberation Sans',sans-serif;font-size:10.8px;font-weight:400;font-style:normal;color:#ffffff;transform:scaleX(0.8536);transform-origin:0 0;">Spaces: 4</div>
<div class="t" style="left:1115.50px;top:673.71px;font-family:'Liberation Sans',sans-serif;font-size:10.8px;font-weight:400;font-style:normal;color:#ffffff;transform:scaleX(0.8825);transform-origin:0 0;">UTF-8</div>
<div class="t" style="left:1155.00px;top:673.71px;font-family:'Liberation Sans',sans-serif;font-size:10.8px;font-weight:400;font-style:normal;color:#ffffff;transform:scaleX(0.8332);transform-origin:0 0;">CRLF</div>
<div class="t" style="left:1190.50px;top:673.71px;font-family:'Liberation Sans',sans-serif;font-size:10.8px;font-weight:400;font-style:normal;color:#ffffff;transform:scaleX(0.9517);transform-origin:0 0;">Python</div>
<div class="t" style="left:1153.00px;top:699.86px;font-family:'Liberation Sans',sans-serif;font-size:10.5px;font-weight:400;font-style:normal;color:#e8e8e8;transform:scaleX(0.9697);transform-origin:0 0;">DAN</div>
<div class="t" style="left:1198.00px;top:692.30px;font-family:'Liberation Sans',sans-serif;font-size:10px;font-weight:400;font-style:normal;color:#e8e8e8;transform:scaleX(0.9508);transform-origin:0 0;">19:50</div>
<div class="t" style="left:1184.70px;top:707.50px;font-family:'Liberation Sans',sans-serif;font-size:10px;font-weight:400;font-style:normal;color:#e8e8e8;transform:scaleX(0.9976);transform-origin:0 0;">11-04-2021</div>
<div class="t" style="left:1259.00px;top:707.28px;font-family:'Liberation Sans',sans-serif;font-size:8.2px;font-weight:700;font-style:normal;color:#ffffff;transform:scaleX(0.8782);transform-origin:0 0;">10</div>
<div class="a" style="left:229px;top:72px;width:1051px;height:3px;background:linear-gradient(#000000aa,#00000000);"></div>
<div class="a" style="left:533px;top:72px;width:291px;height:530px;background:#0b0b0b;"></div>
<div class="a" style="left:535px;top:73px;width:288px;height:26px;background:#ffffff;"></div>
<div class="a" style="left:535px;top:99px;width:288px;height:502px;background:#3bb3f1;"></div>
<div class="a" style="left:535px;top:99px;width:288px;height:1px;background:#5a9ec8;"></div>
<svg class="a" style="left:542px;top:79.5px;" width="13" height="13" viewBox="0 0 13 13"><circle cx="6.3" cy="6.3" r="6" fill="#3a3a3a"/><path d="M2.6 4.6 L4.6 9 L6.3 6.3 L8 8.4 L10.3 4.6 L8.1 6.2 L6.3 4 L4.5 6.2 Z" fill="#fff"/></svg>
<div class="a" style="left:720px;top:86px;width:8.5px;height:1px;background:#111;"></div>
<div class="a" style="left:759px;top:82px;width:8.5px;height:8.5px;background:transparent;border:1px solid #111"></div>
<svg class="a" style="left:798px;top:82px;" width="9" height="9" viewBox="0 0 9 9"><path d="M0.3 0.3 L8.7 8.7 M8.7 0.3 L0.3 8.7" stroke="#111" stroke-width="1"/></svg>
<svg class="a" style="left:535px;top:99px;overflow:hidden" width="288" height="502" viewBox="535 99 288 502"><g stroke="#1c3050" stroke-linecap="round" stroke-linejoin="round">
<path d="M561 130 L565.5 138 M580.5 130 L576 138" stroke-width="3.6"/>
<path d="M561 130 L565.5 138 M580.5 130 L576 138" stroke="#f6ece4" stroke-width="1.6"/>
<rect x="555" y="125.5" width="4.5" height="6.5" rx="1.6" fill="#1c3050"/><rect x="562.8" y="125.5" width="4.5" height="6.5" rx="1.6" fill="#1c3050"/>
<path d="M558 128.7 H565" stroke-width="1.8"/>
<rect x="574.2" y="125.5" width="4.5" height="6.5" rx="1.6" fill="#1c3050"/><rect x="582" y="125.5" width="4.5" height="6.5" rx="1.6" fill="#1c3050"/>
<path d="M577 128.7 H584" stroke-width="1.8"/>
<circle cx="570.7" cy="133.8" r="2.8" fill="#1c3050"/>
<path d="M572.5 134.5 A2 2 0 0 1 568.8 134.5" fill="#f3d9c4" stroke="none"/>
<path d="M565.5 137 H576 L575.2 143.8 H566.3 Z" fill="#7d93f2" stroke-width="1.3"/>
<path d="M566.3 143.8 H575.2 L576.3 149.8 H572 L570.8 147.8 L569.5 149.8 H565.2 Z" fill="#efbd34" stroke-width="1.3"/>
<path d="M567.3 149.5 L563.5 158 M574.3 149.5 L578 158" stroke-width="3.8"/>
<path d="M567.3 149.5 L563.5 158 M574.3 149.5 L578 158" stroke="#f4f0ec" stroke-width="1.6"/>
<path d="M560.5 159.3 H566 M575.5 159.3 H581" stroke-width="2.8"/>
</g><g stroke="#1f3d5c" stroke-linecap="round" stroke-linejoin="round">
<circle cx="610" cy="101.6" r="2.4" fill="#1f3d5c"/>
<path d="M607.5 104.5 L604.5 111.5 L609.5 113.5 L612.5 106 Z" fill="#2f8f6a" stroke-width="1.4"/>
<path d="M611 105.5 L614.5 109 L613.5 111 M607.5 106 L603 107.5" stroke-width="1.9"/>
<path d="M605.5 112 L602 118.5 L598.5 121.5 M609 113 L612 116.5 L610.5 121.5" stroke-width="2.3"/>
<path d="M610 115 L611.5 118" stroke="#f0c060" stroke-width="1"/>
<path d="M595.5 109.5 H600 M596.5 113 H601" stroke-width="1"/>
</g><g stroke="#1b4270" stroke-linecap="round" stroke-linejoin="round" fill="none">
<path d="M739.5 118.6 H762" stroke-width="2.2"/>
<path d="M740.5 118 C743 113 746 110 748 110 C750 110 752.5 113.5 755 117" stroke-width="2.8"/>
<path d="M756 117.5 L758.2 107.5" stroke-width="3"/>
<circle cx="758.7" cy="105" r="2" fill="#1b4270" stroke-width="1"/>
<path d="M760 107.5 L760.2 112" stroke="#f0f0f0" stroke-width="1.1"/>
</g><g stroke="#1a3050" stroke-linecap="round" stroke-linejoin="round">
<circle cx="773.5" cy="153.3" r="5.2" fill="#f4f4f4" stroke-width="2.8"/>
<circle cx="797.3" cy="153.3" r="5.2" fill="#f4f4f4" stroke-width="2.8"/>
<path d="M768 159.4 H805" stroke-width="1.6"/>
<path d="M773.5 153.3 L782.5 146.5 H796.5 L797.3 153.3 M782.5 146.5 L786 153" fill="none" stroke-width="2"/>
<path d="M796 146 L798.5 141.5 L801 142" fill="none" stroke-width="1.8"/>
<path d="M787 134.5 L797.5 141.5" stroke-width="2.2"/>
<path d="M782.5 142.5 L789.5 146 L786.5 152" stroke-width="2.8" fill="none"/>
<path d="M785.5 132.5 L780 141 L784.5 144 L790 135.5 Z" fill="#f0c24a" stroke-width="1.4"/>
<circle cx="787.3" cy="129" r="3" fill="#f1c9a5" stroke-width="1.2"/>
<path d="M784 128.3 C784 124.5 790.5 124.5 790.6 128.3 Z" fill="#1a3050" stroke-width="1"/>
<path d="M784.2 128.6 H790.5" stroke="#c0504a" stroke-width="0.8"/>
</g><g>
<ellipse cx="670.2" cy="146" rx="6.3" ry="11.5" transform="rotate(-6 670.2 146)" fill="#f7f0f0" stroke="#e6f6fd" stroke-width="1.2"/>
<ellipse cx="686.8" cy="146" rx="6.3" ry="11.5" transform="rotate(6 686.8 146)" fill="#f7f0f0" stroke="#e6f6fd" stroke-width="1.2"/>
<ellipse cx="670.6" cy="147" rx="3.6" ry="9" transform="rotate(-6 670.6 147)" fill="#f2889c"/>
<ellipse cx="686.4" cy="147" rx="3.6" ry="9" transform="rotate(6 686.4 147)" fill="#f2889c"/>
<path d="M678.7 153.5 C692 153.5 697 162 696.7 172 C696.5 181 689 187.5 678.7 187.5 C668.5 187.5 660.8 181 660.7 172 C660.5 162 665.5 153.5 678.7 153.5 Z" fill="#f8f0f0" stroke="#e3f4fc" stroke-width="1"/>
<path d="M678.7 153.5 C692 153.5 697 162 696.7 172 C696.5 181 689 187.5 678.7 187.5 Z" fill="#f6e2e4"/>
<circle cx="670.7" cy="167.5" r="1.5" fill="#3a2a2a"/><circle cx="686.5" cy="167.5" r="1.5" fill="#3a2a2a"/>
<ellipse cx="679" cy="172.8" rx="3.8" ry="3.3" fill="#f07f98"/>
<path d="M672.5 179.5 C675.5 182.5 682 182.5 685 179.5" fill="none" stroke="#f2a5b4" stroke-width="2"/>
</g><rect x="534.7" y="198.6" width="287.6" height="1.5" fill="#1f6a98"/><g stroke="#1c3050" stroke-linecap="round" stroke-linejoin="round">
<path d="M597.3 262 L600 269.5 H594.6 Z" fill="#1c3050" stroke-width="1.2"/>
<rect x="591.6" y="269.3" width="11.4" height="24" rx="2.2" fill="#ee5a5e" stroke-width="1.8"/>
<path d="M597.3 275.5 V282.5 M597.3 285.5 V286.5" stroke-width="1.8"/>
<path d="M591.8 290 H602.8" stroke-width="1.2"/>
<path d="M575 281 L590.5 275.5" stroke-width="5.4"/>
<path d="M575 281 L590.5 275.5" stroke="#eceaf2" stroke-width="3"/>
<path d="M574.5 282 L567 299.5" stroke-width="5.4"/>
<path d="M574.5 282 L567 299.5" stroke="#eceaf2" stroke-width="3"/>
<path d="M572 271.5 L587 268.5" stroke-width="4.6"/>
<path d="M572 271.5 L587 268.5" stroke="#f4f4f8" stroke-width="2.4"/>
<path d="M562.5 270 C566 268.5 572 268.5 575.5 271 L578.5 281.5 C574 283.5 567 283.5 563.5 282 Z" fill="#f4f4f8" stroke-width="1.5"/>
<path d="M567 272 C565.5 275 566 278 568.5 280.5" fill="none" stroke-width="1.2"/>
<path d="M564 281 H577.5" stroke-width="1.4"/>
<circle cx="587.8" cy="268.2" r="2.3" fill="#f3e2d6" stroke-width="1.3"/>
<circle cx="566.3" cy="265.3" r="3.6" fill="#f3d7c2" stroke-width="1.5"/>
<path d="M562 301 H577" stroke-width="2.6"/>
</g><g>
<circle cx="678.6" cy="281.6" r="20.4" fill="#cf5c77" stroke="#26305a" stroke-width="1.2"/>
<circle cx="678.6" cy="281.6" r="16.6" fill="#eff1f6" stroke="#7a2035" stroke-width="1.2"/>
<g fill="#333"><circle cx="678.6" cy="268.3" r="0.9"/><circle cx="678.6" cy="294.90000000000003" r="0.9"/><circle cx="665.3000000000001" cy="281.6" r="0.9"/><circle cx="691.9" cy="281.6" r="0.9"/></g>
<path d="M678.6 281.6 L668.6 273.6" stroke="#2c2c34" stroke-width="2.6" stroke-linecap="round"/>
<path d="M678.6 281.6 L684.4 276.1" stroke="#2c2c34" stroke-width="2.6" stroke-linecap="round"/>
<path d="M678.6 281.6 L687.6 288.6" stroke="#2c2c34" stroke-width="0.9"/>
<circle cx="678.6" cy="281.6" r="1.8" fill="#6a1a2a"/>
</g><g>
<circle cx="678.6" cy="369.4" r="20.4" fill="#cf5c77" stroke="#26305a" stroke-width="1.2"/>
<circle cx="678.6" cy="369.4" r="16.6" fill="#eff1f6" stroke="#7a2035" stroke-width="1.2"/>
<g fill="#333"><circle cx="678.6" cy="356.09999999999997" r="0.9"/><circle cx="678.6" cy="382.7" r="0.9"/><circle cx="665.3000000000001" cy="369.4" r="0.9"/><circle cx="691.9" cy="369.4" r="0.9"/></g>
<path d="M678.6 369.4 L668.6 361.4" stroke="#2c2c34" stroke-width="2.6" stroke-linecap="round"/>
<path d="M678.6 369.4 L684.4 363.9" stroke="#2c2c34" stroke-width="2.6" stroke-linecap="round"/>
<path d="M678.6 369.4 L687.6 376.4" stroke="#2c2c34" stroke-width="0.9"/>
<circle cx="678.6" cy="369.4" r="1.8" fill="#6a1a2a"/>
</g><g stroke="#1c3558" stroke-linecap="round" stroke-linejoin="round" transform="translate(0 0)">
<path d="M760 288 V301 M765 288 V301 M783 292 V301 M787.5 292 V301" stroke-width="1.6"/>
<path d="M767 278 L773.5 265" stroke-width="2.2"/>
<path d="M781 278 L775 264.5" stroke-width="2.2"/>
<path d="M757.5 276 H767 L767.5 288.5 H757 Z" fill="#ee5c6c" stroke-width="1.1"/>
<ellipse cx="762" cy="269.2" rx="5" ry="6" fill="#f6dac8" stroke-width="1"/>
<path d="M756.5 268 C756 262 760 261 762.5 261 C765 261 767.5 261.5 768 263 L766.5 264.5 C764 264 760 265 758.5 268 Z" fill="#3a3a48" stroke-width="0.8"/>
<path d="M780 276 H790.5 L792 292.5 H778.5 Z" fill="#2bb48a" stroke-width="1.1"/>
<path d="M779 268 C779 261.5 783 261 785.5 261 C789 261 792 263 792 268 L792.5 279 L789.5 279 L790 270 C787 267 783 267 781 268 L780 272 Z" fill="#e9c45c" stroke-width="0.9"/>
<ellipse cx="785" cy="270.5" rx="4.5" ry="5.5" fill="#f6dac8" stroke-width="1"/>
<path d="M781 265.5 C783 263 788 263 790.5 266 L786 266.5 Z" fill="#e9c45c" stroke="none"/>
<path d="M758 302 H761 M764 302 H767 M781.5 302 H784.5 M786 302 H789" stroke-width="1.6"/>
<g fill="#2a2020" stroke="none"><circle cx="763.5" cy="268.5" r="0.8"/><circle cx="783.5" cy="270" r="0.8"/></g>
<path d="M761.5 272 Q763.5 273.5 765.5 271.5 M782 274 Q784 275.5 786 273.5" fill="none" stroke="#8a3030" stroke-width="1"/>
</g><g stroke="#1c3558" stroke-linecap="round" stroke-linejoin="round" transform="translate(0 88)">
<path d="M760 288 V301 M765 288 V301 M783 292 V301 M787.5 292 V301" stroke-width="1.6"/>
<path d="M767 278 L773.5 265" stroke-width="2.2"/>
<path d="M781 278 L775 264.5" stroke-width="2.2"/>
<path d="M757.5 276 H767 L767.5 288.5 H757 Z" fill="#ee5c6c" stroke-width="1.1"/>
<ellipse cx="762" cy="269.2" rx="5" ry="6" fill="#f6dac8" stroke-width="1"/>
<path d="M756.5 268 C756 262 760 261 762.5 261 C765 261 767.5 261.5 768 263 L766.5 264.5 C764 264 760 265 758.5 268 Z" fill="#3a3a48" stroke-width="0.8"/>
<path d="M780 276 H790.5 L792 292.5 H778.5 Z" fill="#2bb48a" stroke-width="1.1"/>
<path d="M779 268 C779 261.5 783 261 785.5 261 C789 261 792 263 792 268 L792.5 279 L789.5 279 L790 270 C787 267 783 267 781 268 L780 272 Z" fill="#e9c45c" stroke-width="0.9"/>
<ellipse cx="785" cy="270.5" rx="4.5" ry="5.5" fill="#f6dac8" stroke-width="1"/>
<path d="M781 265.5 C783 263 788 263 790.5 266 L786 266.5 Z" fill="#e9c45c" stroke="none"/>
<path d="M758 302 H761 M764 302 H767 M781.5 302 H784.5 M786 302 H789" stroke-width="1.6"/>
<g fill="#2a2020" stroke="none"><circle cx="763.5" cy="268.5" r="0.8"/><circle cx="783.5" cy="270" r="0.8"/></g>
<path d="M761.5 272 Q763.5 273.5 765.5 271.5 M782 274 Q784 275.5 786 273.5" fill="none" stroke="#8a3030" stroke-width="1"/>
</g><g stroke="#1c3050" stroke-linecap="round" stroke-linejoin="round">
<path d="M580 366 L593 365.5" stroke-width="4.8"/>
<path d="M580 366 L593 365.5" stroke="#f4cfae" stroke-width="2.8"/>
<rect x="592" y="361.5" width="10.5" height="8.5" rx="3.5" fill="#e95c58" stroke-width="1.3"/>
<path d="M565 363 L579 363.5 L579.5 380 H565.5 Z" fill="#f4cfae" stroke-width="1.3"/>
<path d="M569 378 L576 368" stroke-width="1.2"/>
<circle cx="577" cy="365" r="4" fill="#e95c58" stroke-width="1.3"/>
<path d="M576.5 352 C577.5 350 583 350 584.3 351.5 L583.5 355 L584.5 359.5 L580.5 361 L577 358 Z" fill="#f4cfae" stroke-width="1.1"/>
<path d="M576 357 C575 352 577 350.5 580 350.5 L584.5 350.8 L582 353 L579 354.5 L578.5 358 Z" fill="#2e2a30" stroke-width="0.8"/>
<rect x="565" y="380" width="13.5" height="9" fill="#1f2c48" stroke-width="1.1"/>
<rect x="566.5" y="384.5" width="10.5" height="3" fill="#e9685f" stroke="none"/>
</g><g>
<circle cx="582.8" cy="570.4" r="25.2" fill="#ea6a4c" stroke="#141414" stroke-width="2.6"/>
<path d="M571.6 570.4 H594 M582.8 559.4 V581.6" stroke="#141414" stroke-width="8.2" stroke-linecap="square"/><path d="M570.6 570.4 H595 M582.8 558.4 V582.6" stroke="#f7d87a" stroke-width="3.2" stroke-linecap="butt"/>
</g><g stroke="#1a2c4a" stroke-linecap="round" stroke-linejoin="round">
<path d="M661 582 V596 M666.5 582 V596 M675 582 V596 M680.5 582 V596 M688.5 580 V596 M694.5 580 V596" stroke-width="1.7"/>
<path d="M659.5 597 H663 M665 597 H668.5 M673.5 597 H677 M679 597 H682.5 M687 597 H690.5 M693 597 H696.5" stroke-width="1.6"/>
<path d="M656 563 H670 L672 583 H654.5 Z" fill="#ea5a70" stroke-width="1.2"/>
<path d="M671 563 H685 L687 583 H670 Z" fill="#2bb88b" stroke-width="1.2"/>
<path d="M685.5 563 H697 L698 581 H685.5 Z" fill="#f5cf4e" stroke-width="1.2"/>
<path d="M697 571 L702.5 566.5 M702 566.5 L703 563.5" stroke-width="1.6"/>
<path d="M654.5 566 C652 556 655 544.5 664 544.5 C670 544.5 673 548 673 552 L658 556 L657.5 566 Z" fill="#3b9fb8" stroke-width="1.1"/>
<ellipse cx="665" cy="555.5" rx="6.3" ry="7" fill="#f6dcc8" stroke-width="1.1"/>
<path d="M658 552 C659 547 670 546 672.5 551 L666 550 Z" fill="#3b9fb8" stroke-width="0.9"/>
<ellipse cx="678.5" cy="555" rx="6.3" ry="7" fill="#f6dcc8" stroke-width="1.1"/>
<path d="M671.8 552 C671.5 545 685 544 685.2 552 C681 549.5 676 549.5 671.8 552 Z" fill="#e9c85a" stroke-width="1"/>
<ellipse cx="691.5" cy="555.5" rx="6" ry="7" fill="#f6dcc8" stroke-width="1.1"/>
<path d="M685.5 552.5 C685 547 690 545.5 694 545.5 H701.5 L698 549 L697.5 553 C694 550.5 689 550.5 685.5 552.5 Z" fill="#43424a" stroke-width="1"/>
<g fill="#3a2020" stroke="none"><circle cx="667" cy="554.5" r="0.9"/><circle cx="680.5" cy="554" r="0.9"/><circle cx="693.5" cy="554.5" r="0.9"/></g>
<path d="M663 559 Q666 561 668 558.5 M676.5 558.5 Q679.5 560.5 681.5 558 M689.5 559 Q692.5 561 694.5 558.5" fill="none" stroke="#7a3030" stroke-width="1"/>
</g><g stroke="#2a1a0c" stroke-linejoin="round">
<path d="M794.70,560.70 L799.33,561.32 L799.33,567.88 L794.70,568.50 L793.09,572.37 L795.93,576.09 L791.29,580.73 L787.57,577.89 L783.70,579.50 L783.08,584.13 L776.52,584.13 L775.90,579.50 L772.03,577.89 L768.31,580.73 L763.67,576.09 L766.51,572.37 L764.90,568.50 L760.27,567.88 L760.27,561.32 L764.90,560.70 L766.51,556.83 L763.67,553.11 L768.31,548.47 L772.03,551.31 L775.90,549.70 L776.52,545.07 L783.08,545.07 L783.70,549.70 L787.57,551.31 L791.29,548.47 L795.93,553.11 L793.09,556.83 Z" fill="#f5ae22" stroke-width="2"/>
<circle cx="779.8" cy="564.6" r="7.2" fill="#f5ae22" stroke="#6a3a14" stroke-width="2.2"/>
<circle cx="779.8" cy="564.6" r="4.6" fill="#3bb3f1" stroke="#2a1a0c" stroke-width="1.2"/>
<path d="M773.04,579.81 L776.60,580.22 L776.60,584.98 L773.04,585.39 L771.90,588.15 L774.13,590.96 L770.76,594.33 L767.95,592.10 L765.19,593.24 L764.78,596.80 L760.02,596.80 L759.61,593.24 L756.85,592.10 L754.04,594.33 L750.67,590.96 L752.90,588.15 L751.76,585.39 L748.20,584.98 L748.20,580.22 L751.76,579.81 L752.90,577.05 L750.67,574.24 L754.04,570.87 L756.85,573.10 L759.61,571.96 L760.02,568.40 L764.78,568.40 L765.19,571.96 L767.95,573.10 L770.76,570.87 L774.13,574.24 L771.90,577.05 Z" fill="#f5b023" stroke-width="2"/>
<circle cx="762.4" cy="582.6" r="5.3" fill="#f5b023" stroke="#6a3a14" stroke-width="2"/>
<circle cx="762.4" cy="582.6" r="2.7" fill="#9aa6ac" stroke="#2a1a0c" stroke-width="1"/>
</g></svg>
<div class="t" style="left:558.50px;top:80.86px;font-family:'Liberation Sans',sans-serif;font-size:10.5px;font-weight:400;font-style:normal;color:#1a1a1a;transform:scaleX(0.8717);transform-origin:0 0;">Fitness</div>
<div class="t" style="left:620.90px;top:210.96px;font-family:'Liberation Sans',sans-serif;font-size:20.5px;font-weight:400;font-style:normal;color:#dcf5fe;transform:scaleX(0.9259);transform-origin:0 0;-webkit-text-stroke:0.7px currentColor">1 Day Streak!</div>
<div class="t" style="left:545.00px;top:307.68px;font-family:'Liberation Sans',sans-serif;font-size:12.5px;font-weight:400;font-style:normal;color:#dcf5fe;transform:scaleX(1.0019);transform-origin:0 0;-webkit-text-stroke:0.45px currentColor">Tae Kwon Do</div>
<div class="t" style="left:652.50px;top:307.68px;font-family:'Liberation Sans',sans-serif;font-size:12.5px;font-weight:400;font-style:normal;color:#dcf5fe;transform:scaleX(0.9880);transform-origin:0 0;-webkit-text-stroke:0.45px currentColor">2.0 hours</div>
<div class="t" style="left:742.50px;top:307.68px;font-family:'Liberation Sans',sans-serif;font-size:12.5px;font-weight:400;font-style:normal;color:#dcf5fe;transform:scaleX(0.9853);transform-origin:0 0;-webkit-text-stroke:0.45px currentColor">0 high-fives</div>
<div class="t" style="left:546.20px;top:395.18px;font-family:'Liberation Sans',sans-serif;font-size:12.5px;font-weight:400;font-style:normal;color:#dcf5fe;transform:scaleX(1.0187);transform-origin:0 0;-webkit-text-stroke:0.45px currentColor">Boxing class</div>
<div class="t" style="left:656.20px;top:395.18px;font-family:'Liberation Sans',sans-serif;font-size:12.5px;font-weight:400;font-style:normal;color:#dcf5fe;transform:scaleX(0.9918);transform-origin:0 0;-webkit-text-stroke:0.45px currentColor">1.0 hour</div>
<div class="t" style="left:742.50px;top:395.18px;font-family:'Liberation Sans',sans-serif;font-size:12.5px;font-weight:400;font-style:normal;color:#dcf5fe;transform:scaleX(0.9853);transform-origin:0 0;-webkit-text-stroke:0.45px currentColor">0 high-fives</div>
<svg class="a" style="left:656px;top:94px;" width="9" height="13" viewBox="0 0 9 13"><path d="M0.6 0.6 V10.5 L3 8.3 L4.8 12.2 L6.5 11.4 L4.8 7.7 H8 Z" fill="#fff" stroke="#111" stroke-width="0.9" stroke-linejoin="round"/></svg>
</body></html>
